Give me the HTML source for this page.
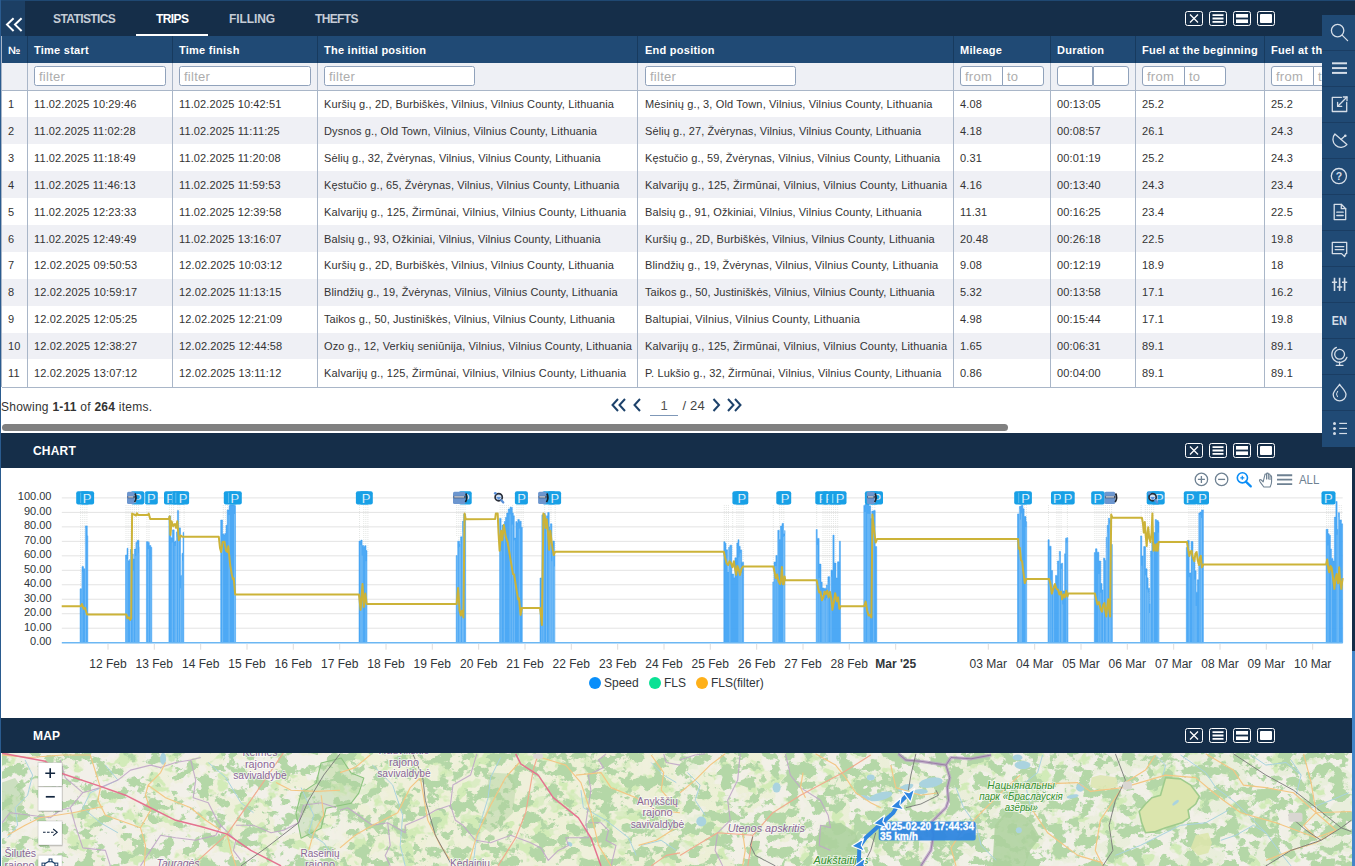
<!DOCTYPE html><html><head><meta charset="utf-8"><title>Trips</title><style>
*{box-sizing:border-box;margin:0;padding:0}
html,body{width:1355px;height:866px;overflow:hidden;background:#fff}
body{position:relative;font-family:"Liberation Sans",sans-serif;font-size:11px;color:#333}
.abs{position:absolute}
.bar{position:absolute;left:0;width:1355px;background:#152e49}
.tab{position:absolute;top:12px;font-weight:bold;font-size:12px;color:#c5ccd6;white-space:nowrap;letter-spacing:.1px}
.ttl{position:absolute;font-weight:bold;font-size:12px;color:#fff;left:33px;letter-spacing:.2px}
.th{position:absolute;top:44px;font-weight:bold;font-size:11px;color:#fff;white-space:nowrap;letter-spacing:.25px}
.td{position:absolute;white-space:nowrap;font-size:11px;color:#333;line-height:14px;letter-spacing:.125px}
.vsep{position:absolute;width:1px;background:#a9b6c8}
.inp{position:absolute;top:66px;height:20px;border:1px solid #90a2bb;border-radius:2.5px;background:#fff;color:#adadad;font-size:13px;letter-spacing:.25px;line-height:19px;padding-left:4px;white-space:nowrap;overflow:hidden}
.row{position:absolute;left:2px;width:1353px;height:26.9px}
.wb{position:absolute;top:11px;width:18px;height:15px;border:1.5px solid #fff;border-radius:2.5px}
.sb{position:absolute;left:0;width:31px;height:36px;border-top:1px solid #2c5786}
</style></head><body>
<div class="bar" style="top:0;height:36px"></div>
<div class="abs" style="left:0;top:0;width:1355px;height:1.3px;background:#1f4872"></div>
<div class="abs" style="left:1px;top:1px;width:24px;height:35px;background:#1c3f64"></div>
<svg class="abs" style="left:5px;top:17px" width="18" height="16" viewBox="0 0 18 16"><path d="M8.6 1.2 L2 7.6 L8.6 14 M16.6 1.2 L10 7.6 L16.6 14" fill="none" stroke="#fff" stroke-width="2"/></svg>
<div class="tab" style="left:53px;letter-spacing:-0.60px;">STATISTICS</div>
<div class="tab" style="left:156px;letter-spacing:-0.60px;color:#fff;">TRIPS</div>
<div class="tab" style="left:229px;letter-spacing:-0.10px;">FILLING</div>
<div class="tab" style="left:315px;letter-spacing:-0.65px;">THEFTS</div>
<div class="abs" style="left:136px;top:34px;width:72px;height:2px;background:#fff"></div>
<div class="wb" style="left:1185px;top:11px"></div><svg class="abs" style="left:1185px;top:11px" width="18" height="15" viewBox="0.5 0 18 15"><path d="M5.5 3.5 L13.5 11.5 M13.5 3.5 L5.5 11.5" stroke="#fff" stroke-width="1.3" fill="none"/></svg><div class="wb" style="left:1209px;top:11px"></div><svg class="abs" style="left:1209px;top:11px" width="18" height="15" viewBox="0.5 0 18 15"><path d="M4 4.2 H15 M4 7.5 H15 M4 10.8 H15" stroke="#fff" stroke-width="1.8" fill="none"/></svg><div class="wb" style="left:1233px;top:11px"></div><svg class="abs" style="left:1233px;top:11px" width="18" height="15" viewBox="0.5 0 18 15"><rect x="3.5" y="3" width="12" height="3.6" fill="#fff"/><rect x="3.5" y="8.4" width="12" height="3.6" fill="#fff"/></svg><div class="wb" style="left:1257px;top:11px"></div><svg class="abs" style="left:1257px;top:11px" width="18" height="15" viewBox="0.5 0 18 15"><rect x="3.5" y="3" width="12" height="9" rx="1" fill="#fff"/></svg>
<div class="abs" style="left:0;top:36px;width:1355px;height:27px;background:#204a75"></div>
<div class="th" style="left:8px">№</div>
<div class="th" style="left:34px">Time start</div>
<div class="th" style="left:179px">Time finish</div>
<div class="th" style="left:324px">The initial position</div>
<div class="th" style="left:645px">End position</div>
<div class="th" style="left:960px">Mileage</div>
<div class="th" style="left:1057px">Duration</div>
<div class="th" style="left:1142px">Fuel at the beginning</div>
<div class="th" style="left:1271px">Fuel at the end</div>
<div class="abs" style="left:2px;top:63px;width:1353px;height:27px;background:#eef0f5"></div>
<div class="abs" style="left:2px;top:90px;width:1353px;height:1px;background:#a9b6c8"></div>
<div class="row" style="top:90.5px;background:#fff"></div>
<div class="row" style="top:117.4px;background:#eff0f5"></div>
<div class="row" style="top:144.3px;background:#fff"></div>
<div class="row" style="top:171.2px;background:#eff0f5"></div>
<div class="row" style="top:198.1px;background:#fff"></div>
<div class="row" style="top:225.0px;background:#eff0f5"></div>
<div class="row" style="top:251.9px;background:#fff"></div>
<div class="row" style="top:278.8px;background:#eff0f5"></div>
<div class="row" style="top:305.7px;background:#fff"></div>
<div class="row" style="top:332.6px;background:#eff0f5"></div>
<div class="row" style="top:359.5px;background:#fff"></div>
<div class="td" style="left:8px;top:97.0px">1</div>
<div class="td" style="left:34px;top:97.0px">11.02.2025 10:29:46</div>
<div class="td" style="left:179px;top:97.0px">11.02.2025 10:42:51</div>
<div class="td" style="left:324px;top:97.0px">Kuršių g., 2D, Burbiškės, Vilnius, Vilnius County, Lithuania</div>
<div class="td" style="left:645px;top:97.0px;letter-spacing:0.152px">Mėsinių g., 3, Old Town, Vilnius, Vilnius County, Lithuania</div>
<div class="td" style="left:960px;top:97.0px">4.08</div>
<div class="td" style="left:1057px;top:97.0px">00:13:05</div>
<div class="td" style="left:1142px;top:97.0px">25.2</div>
<div class="td" style="left:1271px;top:97.0px">25.2</div>
<div class="td" style="left:8px;top:123.9px">2</div>
<div class="td" style="left:34px;top:123.9px">11.02.2025 11:02:28</div>
<div class="td" style="left:179px;top:123.9px">11.02.2025 11:11:25</div>
<div class="td" style="left:324px;top:123.9px;letter-spacing:0.143px">Dysnos g., Old Town, Vilnius, Vilnius County, Lithuania</div>
<div class="td" style="left:645px;top:123.9px;letter-spacing:0.094px">Sėlių g., 27, Žvėrynas, Vilnius, Vilnius County, Lithuania</div>
<div class="td" style="left:960px;top:123.9px">4.18</div>
<div class="td" style="left:1057px;top:123.9px">00:08:57</div>
<div class="td" style="left:1142px;top:123.9px">26.1</div>
<div class="td" style="left:1271px;top:123.9px">24.3</div>
<div class="td" style="left:8px;top:150.8px">3</div>
<div class="td" style="left:34px;top:150.8px">11.02.2025 11:18:49</div>
<div class="td" style="left:179px;top:150.8px">11.02.2025 11:20:08</div>
<div class="td" style="left:324px;top:150.8px;letter-spacing:0.101px">Sėlių g., 32, Žvėrynas, Vilnius, Vilnius County, Lithuania</div>
<div class="td" style="left:645px;top:150.8px;letter-spacing:0.110px">Kęstučio g., 59, Žvėrynas, Vilnius, Vilnius County, Lithuania</div>
<div class="td" style="left:960px;top:150.8px">0.31</div>
<div class="td" style="left:1057px;top:150.8px">00:01:19</div>
<div class="td" style="left:1142px;top:150.8px">25.2</div>
<div class="td" style="left:1271px;top:150.8px">24.3</div>
<div class="td" style="left:8px;top:177.7px">4</div>
<div class="td" style="left:34px;top:177.7px">11.02.2025 11:46:13</div>
<div class="td" style="left:179px;top:177.7px">11.02.2025 11:59:53</div>
<div class="td" style="left:324px;top:177.7px;letter-spacing:0.112px">Kęstučio g., 65, Žvėrynas, Vilnius, Vilnius County, Lithuania</div>
<div class="td" style="left:645px;top:177.7px;letter-spacing:0.158px">Kalvarijų g., 125, Žirmūnai, Vilnius, Vilnius County, Lithuania</div>
<div class="td" style="left:960px;top:177.7px">4.16</div>
<div class="td" style="left:1057px;top:177.7px">00:13:40</div>
<div class="td" style="left:1142px;top:177.7px">24.3</div>
<div class="td" style="left:1271px;top:177.7px">23.4</div>
<div class="td" style="left:8px;top:204.6px">5</div>
<div class="td" style="left:34px;top:204.6px">11.02.2025 12:23:33</div>
<div class="td" style="left:179px;top:204.6px">11.02.2025 12:39:58</div>
<div class="td" style="left:324px;top:204.6px;letter-spacing:0.160px">Kalvarijų g., 125, Žirmūnai, Vilnius, Vilnius County, Lithuania</div>
<div class="td" style="left:645px;top:204.6px;letter-spacing:0.108px">Balsių g., 91, Ožkiniai, Vilnius, Vilnius County, Lithuania</div>
<div class="td" style="left:960px;top:204.6px">11.31</div>
<div class="td" style="left:1057px;top:204.6px">00:16:25</div>
<div class="td" style="left:1142px;top:204.6px">23.4</div>
<div class="td" style="left:1271px;top:204.6px">22.5</div>
<div class="td" style="left:8px;top:231.5px">6</div>
<div class="td" style="left:34px;top:231.5px">11.02.2025 12:49:49</div>
<div class="td" style="left:179px;top:231.5px">11.02.2025 13:16:07</div>
<div class="td" style="left:324px;top:231.5px;letter-spacing:0.110px">Balsių g., 93, Ožkiniai, Vilnius, Vilnius County, Lithuania</div>
<div class="td" style="left:645px;top:231.5px;letter-spacing:0.120px">Kuršių g., 2D, Burbiškės, Vilnius, Vilnius County, Lithuania</div>
<div class="td" style="left:960px;top:231.5px">20.48</div>
<div class="td" style="left:1057px;top:231.5px">00:26:18</div>
<div class="td" style="left:1142px;top:231.5px">22.5</div>
<div class="td" style="left:1271px;top:231.5px">19.8</div>
<div class="td" style="left:8px;top:258.4px">7</div>
<div class="td" style="left:34px;top:258.4px">12.02.2025 09:50:53</div>
<div class="td" style="left:179px;top:258.4px">12.02.2025 10:03:12</div>
<div class="td" style="left:324px;top:258.4px">Kuršių g., 2D, Burbiškės, Vilnius, Vilnius County, Lithuania</div>
<div class="td" style="left:645px;top:258.4px;letter-spacing:0.138px">Blindžių g., 19, Žvėrynas, Vilnius, Vilnius County, Lithuania</div>
<div class="td" style="left:960px;top:258.4px">9.08</div>
<div class="td" style="left:1057px;top:258.4px">00:12:19</div>
<div class="td" style="left:1142px;top:258.4px">18.9</div>
<div class="td" style="left:1271px;top:258.4px">18</div>
<div class="td" style="left:8px;top:285.3px">8</div>
<div class="td" style="left:34px;top:285.3px">12.02.2025 10:59:17</div>
<div class="td" style="left:179px;top:285.3px">12.02.2025 11:13:15</div>
<div class="td" style="left:324px;top:285.3px;letter-spacing:0.145px">Blindžių g., 19, Žvėrynas, Vilnius, Vilnius County, Lithuania</div>
<div class="td" style="left:645px;top:285.3px;letter-spacing:0.056px">Taikos g., 50, Justiniškės, Vilnius, Vilnius County, Lithuania</div>
<div class="td" style="left:960px;top:285.3px">5.32</div>
<div class="td" style="left:1057px;top:285.3px">00:13:58</div>
<div class="td" style="left:1142px;top:285.3px">17.1</div>
<div class="td" style="left:1271px;top:285.3px">16.2</div>
<div class="td" style="left:8px;top:312.2px">9</div>
<div class="td" style="left:34px;top:312.2px">12.02.2025 12:05:25</div>
<div class="td" style="left:179px;top:312.2px">12.02.2025 12:21:09</div>
<div class="td" style="left:324px;top:312.2px;letter-spacing:0.078px">Taikos g., 50, Justiniškės, Vilnius, Vilnius County, Lithuania</div>
<div class="td" style="left:645px;top:312.2px;letter-spacing:0.187px">Baltupiai, Vilnius, Vilnius County, Lithuania</div>
<div class="td" style="left:960px;top:312.2px">4.98</div>
<div class="td" style="left:1057px;top:312.2px">00:15:44</div>
<div class="td" style="left:1142px;top:312.2px">17.1</div>
<div class="td" style="left:1271px;top:312.2px">19.8</div>
<div class="td" style="left:8px;top:339.1px">10</div>
<div class="td" style="left:34px;top:339.1px">12.02.2025 12:38:27</div>
<div class="td" style="left:179px;top:339.1px">12.02.2025 12:44:58</div>
<div class="td" style="left:324px;top:339.1px;letter-spacing:0.152px">Ozo g., 12, Verkių seniūnija, Vilnius, Vilnius County, Lithuania</div>
<div class="td" style="left:645px;top:339.1px;letter-spacing:0.158px">Kalvarijų g., 125, Žirmūnai, Vilnius, Vilnius County, Lithuania</div>
<div class="td" style="left:960px;top:339.1px">1.65</div>
<div class="td" style="left:1057px;top:339.1px">00:06:31</div>
<div class="td" style="left:1142px;top:339.1px">89.1</div>
<div class="td" style="left:1271px;top:339.1px">89.1</div>
<div class="td" style="left:8px;top:366.0px">11</div>
<div class="td" style="left:34px;top:366.0px">12.02.2025 13:07:12</div>
<div class="td" style="left:179px;top:366.0px">12.02.2025 13:11:12</div>
<div class="td" style="left:324px;top:366.0px;letter-spacing:0.160px">Kalvarijų g., 125, Žirmūnai, Vilnius, Vilnius County, Lithuania</div>
<div class="td" style="left:645px;top:366.0px;letter-spacing:0.140px">P. Lukšio g., 32, Žirmūnai, Vilnius, Vilnius County, Lithuania</div>
<div class="td" style="left:960px;top:366.0px">0.86</div>
<div class="td" style="left:1057px;top:366.0px">00:04:00</div>
<div class="td" style="left:1142px;top:366.0px">89.1</div>
<div class="td" style="left:1271px;top:366.0px">89.1</div>
<div class="abs" style="left:2px;top:387px;width:1353px;height:1px;background:#a9b6c8"></div>
<div class="vsep" style="left:27px;top:36px;height:27px;background:#173a5e"></div>
<div class="vsep" style="left:27px;top:63px;height:324px"></div>
<div class="vsep" style="left:172px;top:36px;height:27px;background:#173a5e"></div>
<div class="vsep" style="left:172px;top:63px;height:324px"></div>
<div class="vsep" style="left:317px;top:36px;height:27px;background:#173a5e"></div>
<div class="vsep" style="left:317px;top:63px;height:324px"></div>
<div class="vsep" style="left:637px;top:36px;height:27px;background:#173a5e"></div>
<div class="vsep" style="left:637px;top:63px;height:324px"></div>
<div class="vsep" style="left:953px;top:36px;height:27px;background:#173a5e"></div>
<div class="vsep" style="left:953px;top:63px;height:324px"></div>
<div class="vsep" style="left:1050px;top:36px;height:27px;background:#173a5e"></div>
<div class="vsep" style="left:1050px;top:63px;height:324px"></div>
<div class="vsep" style="left:1135px;top:36px;height:27px;background:#173a5e"></div>
<div class="vsep" style="left:1135px;top:63px;height:324px"></div>
<div class="vsep" style="left:1264px;top:36px;height:27px;background:#173a5e"></div>
<div class="vsep" style="left:1264px;top:63px;height:324px"></div>
<div class="vsep" style="left:1.4px;top:36px;height:351px"></div>
<div class="inp" style="left:34px;width:132px;">filter</div>
<div class="inp" style="left:179px;width:132px;">filter</div>
<div class="inp" style="left:324px;width:151px;">filter</div>
<div class="inp" style="left:645px;width:151px;">filter</div>
<div class="inp" style="left:960px;width:43px;border-radius:3px 0 0 3px;">from</div>
<div class="inp" style="left:1002px;width:42px;border-radius:0 3px 3px 0;">to</div>
<div class="inp" style="left:1057px;width:36px;border-radius:3px 1px 1px 3px;"></div>
<div class="inp" style="left:1093px;width:36px;border-radius:1px 3px 3px 1px;"></div>
<div class="inp" style="left:1142px;width:43px;border-radius:3px 0 0 3px;">from</div>
<div class="inp" style="left:1184px;width:42px;border-radius:0 3px 3px 0;">to</div>
<div class="inp" style="left:1271px;width:43px;border-radius:3px 0 0 3px;">from</div>
<div class="inp" style="left:1313px;width:42px;border-radius:0 3px 3px 0;">to</div>
<div class="abs" style="left:1px;top:400px;font-size:12px;color:#333;white-space:nowrap;letter-spacing:.25px">Showing <b>1-11</b> of <b>264</b> items.</div>
<svg class="abs" style="left:608px;top:396px" width="140" height="22" viewBox="0 0 140 22"><g fill="none" stroke="#1d426b" stroke-width="2"><path d="M10 3 L4.5 9 L10 15 M17 3 L11.5 9 L17 15"/><path d="M32 3 L26.5 9 L32 15"/><path d="M105.500 3 L111 9 L105.500 15"/><path d="M120 3 L125.5 9 L120 15 M127 3 L132.5 9 L127 15"/></g><path d="M42 19.500 H70" stroke="#7f98b8" stroke-width="1"/></svg>
<div class="abs" style="left:650px;top:398px;width:28px;text-align:center;font-size:13px;color:#555">1</div>
<div class="abs" style="left:682.5px;top:398px;font-size:13px;color:#444;white-space:nowrap;letter-spacing:.2px">/ 24</div>
<div class="abs" style="left:2px;top:424px;width:1006px;height:7px;border-radius:3.5px;background:#808080"></div>
<div class="bar" style="top:433px;height:35px"></div>
<div class="ttl" style="top:444px">CHART</div>
<div class="wb" style="left:1185px;top:443px"></div><svg class="abs" style="left:1185px;top:443px" width="18" height="15" viewBox="0.5 0 18 15"><path d="M5.5 3.5 L13.5 11.5 M13.5 3.5 L5.5 11.5" stroke="#fff" stroke-width="1.3" fill="none"/></svg><div class="wb" style="left:1209px;top:443px"></div><svg class="abs" style="left:1209px;top:443px" width="18" height="15" viewBox="0.5 0 18 15"><path d="M4 4.2 H15 M4 7.5 H15 M4 10.8 H15" stroke="#fff" stroke-width="1.8" fill="none"/></svg><div class="wb" style="left:1233px;top:443px"></div><svg class="abs" style="left:1233px;top:443px" width="18" height="15" viewBox="0.5 0 18 15"><rect x="3.5" y="3" width="12" height="3.6" fill="#fff"/><rect x="3.5" y="8.4" width="12" height="3.6" fill="#fff"/></svg><div class="wb" style="left:1257px;top:443px"></div><svg class="abs" style="left:1257px;top:443px" width="18" height="15" viewBox="0.5 0 18 15"><rect x="3.5" y="3" width="12" height="9" rx="1" fill="#fff"/></svg>
<svg class="abs" style="left:0;top:468px" width="1352" height="249" viewBox="0 0 1352 249" font-family="Liberation Sans, sans-serif">
<path d="M61.8 29.90 H1342.7 M61.8 44.38 H1342.7 M61.8 58.86 H1342.7 M61.8 73.34 H1342.7 M61.8 87.82 H1342.7 M61.8 102.30 H1342.7 M61.8 116.78 H1342.7 M61.8 131.26 H1342.7 M61.8 145.74 H1342.7 M61.8 160.22 H1342.7" stroke="#e3e3e3" stroke-width="1" fill="none"/>
<text x="51.500" y="32.4" text-anchor="end" font-size="11" fill="#30363a">100.00</text>
<text x="51.500" y="46.9" text-anchor="end" font-size="11" fill="#30363a">90.00</text>
<text x="51.500" y="61.4" text-anchor="end" font-size="11" fill="#30363a">80.00</text>
<text x="51.500" y="75.8" text-anchor="end" font-size="11" fill="#30363a">70.00</text>
<text x="51.500" y="90.3" text-anchor="end" font-size="11" fill="#30363a">60.00</text>
<text x="51.500" y="104.8" text-anchor="end" font-size="11" fill="#30363a">50.00</text>
<text x="51.500" y="119.3" text-anchor="end" font-size="11" fill="#30363a">40.00</text>
<text x="51.500" y="133.8" text-anchor="end" font-size="11" fill="#30363a">30.00</text>
<text x="51.500" y="148.2" text-anchor="end" font-size="11" fill="#30363a">20.00</text>
<text x="51.500" y="162.7" text-anchor="end" font-size="11" fill="#30363a">10.00</text>
<text x="51.500" y="177.2" text-anchor="end" font-size="11" fill="#30363a">0.00</text>
<path d="M80.6 37.0 V118.0 M82.7 37.0 V99.0 M84.8 37.0 V77.3 M86.9 37.0 V57.8 M126.0 37.0 V73.8 M128.1 37.0 V89.3 M130.2 37.0 V91.3 M132.3 37.0 V83.6 M134.4 37.0 V86.4 M136.5 37.0 V74.4 M138.6 37.0 V75.9 M146.9 37.0 V73.9 M149.0 37.0 V74.9 M169.4 37.0 V49.5 M171.5 37.0 V48.4 M173.6 37.0 V66.2 M177.8 37.0 V42.8 M179.9 37.0 V68.4 M184.1 37.0 V64.6 M223.3 37.0 V67.4 M225.4 37.0 V65.4 M227.5 37.0 V46.5 M359.5 37.0 V73.5 M363.7 37.0 V78.6 M365.8 37.0 V78.4 M367.9 37.0 V85.6 M456.7 37.0 V68.0 M458.8 37.0 V73.8 M460.9 37.0 V72.9 M463.0 37.0 V54.3 M465.1 37.0 V49.9 M500.1 37.0 V50.7 M502.2 37.0 V54.8 M504.3 37.0 V55.6 M506.4 37.0 V48.4 M508.5 37.0 V41.9 M512.7 37.0 V44.4 M516.9 37.0 V54.3 M519.0 37.0 V49.9 M521.1 37.0 V57.5 M523.2 37.0 V60.8 M544.7 37.0 V46.0 M548.9 37.0 V43.3 M551.0 37.0 V54.7 M555.2 37.0 V81.8 M724.3 37.0 V73.8 M726.4 37.0 V80.3 M728.5 37.0 V81.7 M732.7 37.0 V89.0 M736.9 37.0 V80.8 M739.0 37.0 V72.1 M741.1 37.0 V82.0 M743.2 37.0 V111.1 M773.3 37.0 V114.1 M779.6 37.0 V64.3 M781.7 37.0 V52.4 M783.8 37.0 V61.2 M816.7 37.0 V61.5 M823.0 37.0 V120.1 M825.1 37.0 V120.7 M827.2 37.0 V116.7 M829.3 37.0 V109.2 M831.4 37.0 V130.6 M833.5 37.0 V67.1 M835.6 37.0 V101.1 M837.7 37.0 V73.2 M870.6 37.0 V46.2 M872.7 37.0 V43.5 M874.8 37.0 V45.2 M1024.3 37.0 V45.2 M1026.4 37.0 V54.1 M1048.5 37.0 V71.8 M1056.9 37.0 V97.0 M1059.0 37.0 V87.4 M1061.1 37.0 V82.8 M1067.4 37.0 V70.1 M1094.8 37.0 V73.8 M1096.9 37.0 V75.6 M1099.0 37.0 V76.5 M1101.1 37.0 V112.9 M1103.2 37.0 V122.1 M1105.3 37.0 V84.4 M1107.4 37.0 V60.2 M1109.5 37.0 V49.0 M1111.6 37.0 V61.7 M1141.1 37.0 V68.1 M1145.3 37.0 V81.4 M1147.4 37.0 V101.3 M1149.5 37.0 V135.2 M1151.6 37.0 V77.7 M1153.7 37.0 V49.1 M1188.9 37.0 V91.6 M1191.0 37.0 V88.5 M1193.1 37.0 V80.7 M1195.2 37.0 V100.6 M1197.3 37.0 V106.2 M1199.4 37.0 V45.1 M1201.5 37.0 V43.1 M1203.6 37.0 V43.7 M1326.6 37.0 V61.8 M1328.7 37.0 V66.1 M1330.8 37.0 V79.4 M1332.9 37.0 V93.2 M1335.0 37.0 V56.0 M1339.2 37.0 V45.1 M1341.3 37.0 V55.3" stroke="#c9cfc9" stroke-width="0.9" stroke-dasharray="1 1" fill="none" opacity=".55"/>
<path d="M80.1 174.7 L80.1 120.8 L82.0 120.8 L82.0 98.6 L83.5 98.6 L83.5 100.8 L85.4 100.8 L85.4 57.9 L87.3 57.9 L87.3 67.8 L87.8 67.8 L87.8 174.7 Z" fill="#3fa2f4" fill-opacity=".93" stroke="#3a9ff2" stroke-width="0.500" stroke-linejoin="round"/>
<path d="M82.0 103.8 V174.7 M85.4 60.2 V174.7" stroke="#9fd0f9" stroke-width="0.600" fill="none" opacity="0.8"/>
<path d="M125.5 174.7 L125.5 87.0 L127.0 87.0 L127.0 80.3 L128.0 80.3 L128.0 92.8 L129.5 92.8 L129.5 91.5 L130.5 91.5 L130.5 81.4 L132.0 81.4 L132.0 86.0 L133.2 86.0 L133.2 90.9 L134.4 90.9 L134.4 81.1 L135.9 81.1 L135.9 74.4 L137.1 74.4 L137.1 72.4 L139.0 72.4 L139.0 79.2 L139.2 79.2 L139.2 174.7 Z" fill="#3fa2f4" fill-opacity=".93" stroke="#3a9ff2" stroke-width="0.500" stroke-linejoin="round"/>
<path d="M127.0 91.1 V174.7 M130.5 85.7 V174.7 M133.2 102.6 V174.7 M135.9 88.1 V174.7 M137.1 75.6 V174.7 M139.0 85.2 V174.7" stroke="#9fd0f9" stroke-width="0.600" fill="none" opacity="0.8"/>
<path d="M146.4 174.7 L146.4 73.7 L148.3 73.7 L148.3 74.4 L149.3 74.4 L149.3 77.5 L150.8 77.5 L150.8 79.3 L151.8 79.3 L151.8 174.7 Z" fill="#3fa2f4" fill-opacity=".93" stroke="#3a9ff2" stroke-width="0.500" stroke-linejoin="round"/>
<path d="M148.3 81.1 V174.7 M150.8 91.9 V174.7" stroke="#9fd0f9" stroke-width="0.600" fill="none" opacity="0.8"/>
<path d="M168.9 174.7 L168.9 48.0 L170.8 48.0 L170.8 69.7 L172.3 69.7 L172.3 61.9 L174.2 61.9 L174.2 74.1 L175.2 74.1 L175.2 73.0 L176.4 73.0 L176.4 63.9 L177.4 63.9 L177.4 42.6 L178.6 42.6 L178.6 59.9 L180.5 59.9 L180.5 107.4 L182.0 107.4 L182.0 85.3 L183.0 85.3 L183.0 64.4 L183.8 64.4 L183.8 174.7 Z" fill="#3fa2f4" fill-opacity=".93" stroke="#3a9ff2" stroke-width="0.500" stroke-linejoin="round"/>
<path d="M172.3 74.3 V174.7 M175.2 78.0 V174.7 M176.4 68.8 V174.7 M178.6 66.9 V174.7 M180.5 120.3 V174.7 M182.0 92.8 V174.7" stroke="#9fd0f9" stroke-width="0.600" fill="none" opacity="0.8"/>
<path d="M220.7 174.7 L220.7 52.0 L222.6 52.0 L222.6 65.9 L223.8 65.9 L223.8 66.9 L224.8 66.9 L224.8 65.4 L226.0 65.4 L226.0 57.3 L227.2 57.3 L227.2 41.9 L229.1 41.9 L229.1 37.6 L230.1 37.6 L230.1 37.1 L231.6 37.1 L231.6 37.0 L233.5 37.0 L233.5 37.0 L234.5 37.0 L234.5 37.6 L235.5 37.6 L235.6 174.7 Z" fill="#3fa2f4" fill-opacity=".93" stroke="#3a9ff2" stroke-width="0.500" stroke-linejoin="round"/>
<path d="M222.6 77.2 V174.7 M229.1 47.0 V174.7 M234.5 46.0 V174.7" stroke="#9fd0f9" stroke-width="0.600" fill="none" opacity="0.8"/>
<path d="M359.0 174.7 L359.0 73.0 L360.9 73.0 L360.9 72.1 L362.1 72.1 L362.1 77.5 L363.6 77.5 L363.6 78.4 L364.8 78.4 L364.8 77.7 L366.0 77.7 L366.0 82.6 L367.0 82.6 L367.0 174.7 Z" fill="#3fa2f4" fill-opacity=".93" stroke="#3a9ff2" stroke-width="0.500" stroke-linejoin="round"/>
<path d="M360.9 77.0 V174.7 M362.1 87.6 V174.7 M366.0 93.2 V174.7" stroke="#9fd0f9" stroke-width="0.600" fill="none" opacity="0.8"/>
<path d="M456.2 174.7 L456.2 87.6 L457.7 87.6 L457.7 73.2 L459.6 73.2 L459.6 75.7 L460.6 75.7 L460.6 68.8 L462.5 68.8 L462.5 53.2 L463.7 53.2 L463.7 46.1 L465.6 46.1 L465.7 174.7 Z" fill="#3fa2f4" fill-opacity=".93" stroke="#3a9ff2" stroke-width="0.500" stroke-linejoin="round"/>
<path d="M457.7 80.2 V174.7 M459.6 78.8 V174.7 M460.6 74.9 V174.7 M462.5 63.6 V174.7 M463.7 54.4 V174.7" stroke="#9fd0f9" stroke-width="0.600" fill="none" opacity="0.8"/>
<path d="M499.6 174.7 L499.6 50.4 L501.1 50.4 L501.1 72.2 L502.1 72.2 L502.1 57.0 L503.3 57.0 L503.3 64.5 L504.3 64.5 L504.3 53.5 L505.5 53.5 L505.5 49.3 L506.7 49.3 L506.7 45.1 L508.2 45.1 L508.2 41.0 L510.1 41.0 L510.1 39.0 L511.1 39.0 L511.1 39.4 L512.3 39.4 L512.3 44.9 L513.3 44.9 L513.3 47.7 L514.3 47.7 L514.3 70.1 L515.8 70.1 L515.8 53.6 L516.8 53.6 L516.8 54.8 L517.8 54.8 L517.8 51.4 L519.3 51.4 L519.3 53.2 L521.2 53.2 L521.2 59.3 L522.3 59.3 L522.3 174.7 Z" fill="#3fa2f4" fill-opacity=".93" stroke="#3a9ff2" stroke-width="0.500" stroke-linejoin="round"/>
<path d="M501.1 82.7 V174.7 M504.3 57.7 V174.7 M510.1 46.4 V174.7 M512.3 56.5 V174.7 M514.3 72.3 V174.7 M519.3 60.5 V174.7" stroke="#9fd0f9" stroke-width="0.600" fill="none" opacity="0.8"/>
<path d="M540.0 174.7 L540.0 110.0 L541.9 110.0 L541.9 46.8 L543.8 46.8 L543.8 45.5 L545.3 45.5 L545.3 49.7 L546.5 49.7 L546.5 47.8 L547.7 47.8 L547.7 44.5 L549.2 44.5 L549.2 59.1 L550.4 59.1 L550.4 55.8 L551.9 55.8 L551.9 83.4 L552.9 83.4 L552.9 73.0 L554.4 73.0 L554.4 86.6 L554.9 86.6 L554.9 174.7 Z" fill="#3fa2f4" fill-opacity=".93" stroke="#3a9ff2" stroke-width="0.500" stroke-linejoin="round"/>
<path d="M541.9 48.8 V174.7 M543.8 51.5 V174.7 M546.5 50.2 V174.7 M549.2 63.3 V174.7 M550.4 58.8 V174.7 M551.9 93.2 V174.7 M552.9 84.3 V174.7 M554.4 98.4 V174.7" stroke="#9fd0f9" stroke-width="0.600" fill="none" opacity="0.8"/>
<path d="M723.8 174.7 L723.8 73.7 L725.0 73.7 L725.0 75.2 L726.0 75.2 L726.0 81.8 L727.5 81.8 L727.5 103.9 L728.7 103.9 L728.7 79.2 L729.9 79.2 L729.9 77.2 L731.8 77.2 L731.8 106.1 L733.7 106.1 L733.7 109.8 L734.9 109.8 L734.9 89.8 L736.8 89.8 L736.8 74.9 L738.0 74.9 L738.0 71.8 L739.0 71.8 L739.0 78.3 L740.2 78.3 L740.2 81.9 L741.7 81.9 L741.7 94.2 L743.6 94.2 L743.6 174.7 Z" fill="#3fa2f4" fill-opacity=".93" stroke="#3a9ff2" stroke-width="0.500" stroke-linejoin="round"/>
<path d="M729.9 79.3 V174.7 M739.0 89.2 V174.7 M740.2 84.8 V174.7 M741.7 105.0 V174.7" stroke="#9fd0f9" stroke-width="0.600" fill="none" opacity="0.8"/>
<path d="M772.8 174.7 L772.8 114.0 L774.0 114.0 L774.0 94.0 L775.9 94.0 L775.9 87.5 L777.8 87.5 L777.8 62.3 L779.3 62.3 L779.3 71.6 L780.5 71.6 L780.5 58.0 L782.0 58.0 L782.0 55.4 L783.5 55.4 L783.5 65.8 L784.7 65.8 L784.7 62.5 L785.0 62.5 L785.0 174.7 Z" fill="#3fa2f4" fill-opacity=".93" stroke="#3a9ff2" stroke-width="0.500" stroke-linejoin="round"/>
<path d="M774.0 98.6 V174.7 M775.9 98.0 V174.7 M777.8 69.9 V174.7 M783.5 68.8 V174.7 M784.7 68.0 V174.7" stroke="#9fd0f9" stroke-width="0.600" fill="none" opacity="0.8"/>
<path d="M816.2 174.7 L816.2 61.5 L817.2 61.5 L817.2 70.4 L819.1 70.4 L819.1 96.1 L821.0 96.1 L821.0 114.1 L822.2 114.1 L822.2 120.1 L823.7 120.1 L823.7 120.6 L824.9 120.6 L824.9 120.4 L826.4 120.4 L826.4 117.0 L827.9 117.0 L827.9 108.7 L829.8 108.7 L829.8 124.6 L831.0 124.6 L831.0 102.3 L832.9 102.3 L832.9 67.1 L834.1 67.1 L834.1 95.0 L836.0 95.0 L836.0 110.0 L837.5 110.0 L837.5 93.8 L839.4 93.8 L839.4 73.2 L840.4 73.2 L840.6 174.7 Z" fill="#3fa2f4" fill-opacity=".93" stroke="#3a9ff2" stroke-width="0.500" stroke-linejoin="round"/>
<path d="M817.2 76.9 V174.7 M819.1 110.1 V174.7 M822.2 127.2 V174.7 M823.7 123.2 V174.7 M824.9 132.4 V174.7 M826.4 130.2 V174.7 M827.9 113.9 V174.7 M831.0 108.8 V174.7" stroke="#9fd0f9" stroke-width="0.600" fill="none" opacity="0.8"/>
<path d="M863.8 174.7 L863.8 37.4 L865.0 37.4 L865.0 36.2 L866.0 36.2 L866.0 36.0 L867.9 36.0 L867.9 36.0 L869.1 36.0 L869.1 37.9 L870.6 37.9 L870.6 50.6 L871.8 50.6 L871.8 43.1 L873.7 43.1 L873.7 42.6 L875.2 42.6 L875.2 78.6 L876.7 78.6 L876.8 174.7 Z" fill="#3fa2f4" fill-opacity=".93" stroke="#3a9ff2" stroke-width="0.500" stroke-linejoin="round"/>
<path d="M865.0 44.0 V174.7 M867.9 45.8 V174.7 M869.1 45.9 V174.7 M873.7 48.6 V174.7" stroke="#9fd0f9" stroke-width="0.600" fill="none" opacity="0.8"/>
<path d="M1017.5 174.7 L1017.5 45.9 L1019.4 45.9 L1019.4 38.5 L1020.4 38.5 L1020.4 38.0 L1021.4 38.0 L1021.4 37.3 L1022.9 37.3 L1022.9 40.8 L1024.1 40.8 L1024.1 48.5 L1026.0 48.5 L1026.0 53.8 L1026.7 53.8 L1026.7 174.7 Z" fill="#3fa2f4" fill-opacity=".93" stroke="#3a9ff2" stroke-width="0.500" stroke-linejoin="round"/>
<path d="M1019.4 41.2 V174.7 M1020.4 51.6 V174.7 M1021.4 45.4 V174.7 M1026.0 59.1 V174.7" stroke="#9fd0f9" stroke-width="0.600" fill="none" opacity="0.8"/>
<path d="M1048.0 174.7 L1048.0 71.7 L1049.2 71.7 L1049.2 78.2 L1051.1 78.2 L1051.1 102.5 L1052.6 102.5 L1052.6 120.6 L1053.6 120.6 L1053.6 117.7 L1055.5 117.7 L1055.5 107.4 L1057.4 107.4 L1057.4 93.1 L1059.3 93.1 L1059.3 83.4 L1060.5 83.4 L1060.5 95.8 L1061.7 95.8 L1061.7 95.2 L1062.7 95.2 L1062.7 122.9 L1064.6 122.9 L1064.6 85.8 L1065.6 85.8 L1065.6 70.2 L1066.8 70.2 L1066.8 69.7 L1067.8 69.7 L1068.0 174.7 Z" fill="#3fa2f4" fill-opacity=".93" stroke="#3a9ff2" stroke-width="0.500" stroke-linejoin="round"/>
<path d="M1049.2 81.8 V174.7 M1051.1 112.1 V174.7 M1053.6 120.5 V174.7 M1059.3 88.1 V174.7 M1061.7 100.8 V174.7 M1062.7 136.4 V174.7 M1066.8 74.6 V174.7" stroke="#9fd0f9" stroke-width="0.600" fill="none" opacity="0.8"/>
<path d="M1094.3 174.7 L1094.3 84.6 L1095.5 84.6 L1095.5 80.8 L1097.0 80.8 L1097.0 84.2 L1098.9 84.2 L1098.9 93.0 L1100.8 93.0 L1100.8 115.5 L1102.0 115.5 L1102.0 122.0 L1103.5 122.0 L1103.5 90.2 L1105.0 90.2 L1105.0 92.6 L1106.2 92.6 L1106.2 69.3 L1107.2 69.3 L1107.2 57.2 L1108.4 57.2 L1108.4 50.2 L1109.6 50.2 L1109.6 52.3 L1110.8 52.3 L1110.8 76.4 L1112.3 76.4 L1112.4 174.7 Z" fill="#3fa2f4" fill-opacity=".93" stroke="#3a9ff2" stroke-width="0.500" stroke-linejoin="round"/>
<path d="M1098.9 105.9 V174.7 M1100.8 124.7 V174.7 M1103.5 92.5 V174.7 M1106.2 79.9 V174.7 M1107.2 64.6 V174.7 M1109.6 55.6 V174.7 M1110.8 80.4 V174.7" stroke="#9fd0f9" stroke-width="0.600" fill="none" opacity="0.8"/>
<path d="M1140.6 174.7 L1140.6 68.0 L1141.8 68.0 L1141.8 88.1 L1143.7 88.1 L1143.7 78.6 L1145.6 78.6 L1145.6 100.8 L1147.1 100.8 L1147.1 109.8 L1148.1 109.8 L1148.1 120.2 L1149.6 120.2 L1149.6 135.7 L1150.6 135.7 L1150.6 83.0 L1151.8 83.0 L1151.8 73.6 L1153.3 73.6 L1153.3 64.6 L1155.2 64.6 L1155.2 51.6 L1156.4 51.6 L1156.4 52.6 L1158.3 52.6 L1158.3 53.9 L1159.0 53.9 L1159.0 174.7 Z" fill="#3fa2f4" fill-opacity=".93" stroke="#3a9ff2" stroke-width="0.500" stroke-linejoin="round"/>
<path d="M1141.8 97.7 V174.7 M1143.7 88.1 V174.7 M1145.6 107.3 V174.7 M1147.1 121.4 V174.7 M1148.1 124.5 V174.7 M1149.6 145.0 V174.7 M1150.6 89.1 V174.7 M1153.3 75.6 V174.7 M1158.3 64.6 V174.7" stroke="#9fd0f9" stroke-width="0.600" fill="none" opacity="0.8"/>
<path d="M1186.3 174.7 L1186.3 79.4 L1187.3 79.4 L1187.3 72.6 L1189.2 72.6 L1189.2 104.9 L1191.1 104.9 L1191.1 73.5 L1193.0 73.5 L1193.0 89.7 L1194.9 89.7 L1194.9 102.8 L1196.1 102.8 L1196.1 124.2 L1197.3 124.2 L1197.3 111.8 L1198.8 111.8 L1198.8 45.1 L1200.0 45.1 L1200.0 44.0 L1201.5 44.0 L1201.5 42.0 L1203.4 42.0 L1203.4 174.7 Z" fill="#3fa2f4" fill-opacity=".93" stroke="#3a9ff2" stroke-width="0.500" stroke-linejoin="round"/>
<path d="M1189.2 109.2 V174.7 M1193.0 92.4 V174.7 M1194.9 111.4 V174.7 M1196.1 137.9 V174.7 M1200.0 47.0 V174.7 M1201.5 50.0 V174.7" stroke="#9fd0f9" stroke-width="0.600" fill="none" opacity="0.8"/>
<path d="M1326.1 174.7 L1326.1 61.3 L1328.0 61.3 L1328.0 65.8 L1329.2 65.8 L1329.2 67.2 L1330.4 67.2 L1330.4 80.9 L1331.4 80.9 L1331.4 90.4 L1332.9 90.4 L1332.9 92.9 L1334.4 92.9 L1334.4 49.1 L1335.9 49.1 L1335.9 33.5 L1337.1 33.5 L1337.1 61.3 L1338.3 61.3 L1338.3 44.8 L1339.5 44.8 L1339.5 52.0 L1341.4 52.0 L1341.4 55.8 L1342.6 55.8 L1342.7 174.7 Z" fill="#3fa2f4" fill-opacity=".93" stroke="#3a9ff2" stroke-width="0.500" stroke-linejoin="round"/>
<path d="M1328.0 77.5 V174.7 M1331.4 98.1 V174.7 M1337.1 66.8 V174.7 M1338.3 49.0 V174.7" stroke="#9fd0f9" stroke-width="0.600" fill="none" opacity="0.8"/>
<path d="M61.8 174.70 H1342.7" stroke="#6cb7f3" stroke-width="1.6" fill="none"/>
<path d="M61.7 138.3 L80.7 138.3 L82.0 136.1 L83.6 140.8 L85.1 139.9 L87.0 146.5 L126.4 146.5 L127.4 150.3 L128.9 149.4 L130.2 151.9 L131.2 150.3 L132.1 45.6 L136.0 47.5 L136.9 45.2 L138.0 47.1 L148.0 47.1 L148.7 45.6 L150.2 50.9 L168.9 50.9 L169.7 48.4 L170.4 66.9 L171.6 53.2 L173.1 58.0 L175.0 56.0 L176.1 59.9 L177.3 53.2 L178.8 72.2 L180.7 67.5 L182.6 68.8 L218.8 68.8 L220.0 79.9 L221.1 84.0 L222.6 74.1 L224.5 73.8 L226.0 82.7 L227.6 84.0 L228.3 78.3 L230.2 97.0 L231.8 106.5 L232.9 111.3 L233.7 110.3 L235.2 126.5 L255.0 126.5 L340.0 126.5 L359.0 126.5 L360.6 141.8 L362.5 116.0 L363.8 138.9 L365.3 125.6 L366.7 136.1 L456.6 136.1 L458.1 119.9 L459.6 142.7 L460.8 147.5 L461.9 142.7 L463.4 149.4 L464.6 45.6 L465.7 51.3 L495.2 50.9 L495.8 45.6 L497.7 45.6 L498.5 64.6 L499.6 82.7 L501.1 62.7 L502.3 72.2 L503.8 57.0 L505.7 68.4 L507.6 74.1 L510.5 91.3 L513.0 106.1 L514.1 106.5 L516.2 119.9 L518.1 131.3 L519.0 130.3 L520.6 146.9 L521.9 139.9 L540.0 139.9 L541.1 148.4 L541.9 157.0 L543.4 45.6 L544.8 47.5 L545.7 59.9 L546.7 51.3 L548.0 64.6 L549.1 81.8 L550.3 62.7 L551.4 72.2 L552.6 80.8 L553.7 87.1 L555.2 83.7 L700.0 83.7 L723.8 83.7 L725.1 89.4 L726.7 95.5 L728.2 97.0 L729.5 93.2 L731.0 95.1 L732.4 99.3 L733.9 93.2 L735.0 100.8 L736.2 106.9 L737.3 98.0 L738.5 100.8 L740.0 106.9 L741.5 100.8 L742.9 98.5 L773.3 98.5 L774.7 104.6 L775.8 110.3 L777.1 106.5 L778.5 113.2 L780.0 116.0 L781.1 110.3 L781.9 98.9 L782.7 116.0 L783.8 116.4 L784.6 108.4 L785.3 112.2 L816.6 112.2 L818.1 119.9 L819.2 124.6 L820.4 123.7 L821.9 132.2 L823.4 129.4 L824.6 123.7 L825.7 126.0 L827.2 122.7 L828.6 129.4 L829.9 123.7 L831.4 131.3 L832.4 141.8 L833.7 135.1 L835.2 125.2 L836.8 133.2 L838.1 129.4 L839.4 140.8 L840.6 138.3 L864.2 138.3 L865.7 133.6 L867.2 142.7 L868.6 147.5 L869.9 146.9 L871.4 149.4 L872.4 46.5 L873.3 55.1 L874.3 63.7 L874.9 68.4 L875.6 74.5 L877.1 70.9 L1000.0 70.9 L1018.1 70.9 L1018.7 80.8 L1019.8 79.9 L1021.0 92.2 L1022.1 93.2 L1023.2 102.7 L1024.8 115.1 L1026.3 110.9 L1049.1 110.9 L1050.5 116.0 L1051.8 125.6 L1053.3 120.8 L1054.9 116.0 L1056.4 120.8 L1058.1 121.8 L1059.4 126.5 L1061.0 123.7 L1062.1 131.3 L1063.6 126.5 L1064.8 129.4 L1066.3 122.7 L1067.4 128.4 L1068.2 125.6 L1094.9 125.6 L1096.2 131.3 L1097.5 136.6 L1099.0 134.1 L1100.6 140.8 L1101.9 143.7 L1103.2 137.0 L1104.4 135.1 L1105.3 142.7 L1106.3 148.4 L1107.2 138.9 L1108.2 131.3 L1109.1 140.8 L1110.1 148.4 L1111.2 46.5 L1112.4 49.8 L1141.9 49.8 L1142.9 55.1 L1143.8 64.6 L1144.8 54.1 L1145.7 67.5 L1146.7 78.0 L1147.6 64.6 L1148.2 59.3 L1149.3 70.3 L1150.5 74.1 L1151.6 64.6 L1152.4 45.6 L1153.1 74.1 L1153.5 82.7 L1154.7 76.4 L1155.8 82.7 L1157.0 76.0 L1157.7 82.7 L1158.5 74.1 L1187.0 74.1 L1188.2 81.8 L1189.3 87.9 L1190.5 83.7 L1191.6 82.7 L1192.8 89.4 L1194.3 93.2 L1195.4 85.6 L1196.6 84.0 L1197.7 92.2 L1199.0 97.0 L1200.0 89.4 L1200.8 87.9 L1201.9 99.3 L1203.4 96.6 L1240.0 96.6 L1239.9 96.6 L1326.1 96.6 L1327.2 91.4 L1328.2 99.7 L1329.2 104.2 L1330.5 98.0 L1331.7 100.1 L1333.0 110.1 L1334.4 120.9 L1335.5 110.1 L1336.7 105.9 L1338.0 115.3 L1338.8 110.1 L1339.2 99.3 L1340.0 112.1 L1341.3 120.9 L1342.1 114.2 L1342.7 110.1" fill="none" stroke="#ccb338" stroke-width="2" stroke-linejoin="round" stroke-linecap="butt"/>
<text x="108.0" y="200.3" text-anchor="middle" font-size="12" fill="#30363a">12 Feb</text>
<text x="154.3" y="200.3" text-anchor="middle" font-size="12" fill="#30363a">13 Feb</text>
<text x="200.7" y="200.3" text-anchor="middle" font-size="12" fill="#30363a">14 Feb</text>
<text x="247.0" y="200.3" text-anchor="middle" font-size="12" fill="#30363a">15 Feb</text>
<text x="293.3" y="200.3" text-anchor="middle" font-size="12" fill="#30363a">16 Feb</text>
<text x="339.7" y="200.3" text-anchor="middle" font-size="12" fill="#30363a">17 Feb</text>
<text x="386.0" y="200.3" text-anchor="middle" font-size="12" fill="#30363a">18 Feb</text>
<text x="432.3" y="200.3" text-anchor="middle" font-size="12" fill="#30363a">19 Feb</text>
<text x="478.7" y="200.3" text-anchor="middle" font-size="12" fill="#30363a">20 Feb</text>
<text x="525.0" y="200.3" text-anchor="middle" font-size="12" fill="#30363a">21 Feb</text>
<text x="571.3" y="200.3" text-anchor="middle" font-size="12" fill="#30363a">22 Feb</text>
<text x="617.7" y="200.3" text-anchor="middle" font-size="12" fill="#30363a">23 Feb</text>
<text x="664.0" y="200.3" text-anchor="middle" font-size="12" fill="#30363a">24 Feb</text>
<text x="710.3" y="200.3" text-anchor="middle" font-size="12" fill="#30363a">25 Feb</text>
<text x="756.7" y="200.3" text-anchor="middle" font-size="12" fill="#30363a">26 Feb</text>
<text x="803.0" y="200.3" text-anchor="middle" font-size="12" fill="#30363a">27 Feb</text>
<text x="849.3" y="200.3" text-anchor="middle" font-size="12" fill="#30363a">28 Feb</text>
<text x="895.7" y="200.3" text-anchor="middle" font-size="12" fill="#30363a" font-weight="bold">Mar '25</text>
<text x="988.3" y="200.3" text-anchor="middle" font-size="12" fill="#30363a">03 Mar</text>
<text x="1034.7" y="200.3" text-anchor="middle" font-size="12" fill="#30363a">04 Mar</text>
<text x="1081.0" y="200.3" text-anchor="middle" font-size="12" fill="#30363a">05 Mar</text>
<text x="1127.3" y="200.3" text-anchor="middle" font-size="12" fill="#30363a">06 Mar</text>
<text x="1173.7" y="200.3" text-anchor="middle" font-size="12" fill="#30363a">07 Mar</text>
<text x="1220.0" y="200.3" text-anchor="middle" font-size="12" fill="#30363a">08 Mar</text>
<text x="1266.3" y="200.3" text-anchor="middle" font-size="12" fill="#30363a">09 Mar</text>
<text x="1312.7" y="200.3" text-anchor="middle" font-size="12" fill="#30363a">10 Mar</text>
<path d="M108.0 175.7 V181.7 M154.3 175.7 V181.7 M200.7 175.7 V181.7 M247.0 175.7 V181.7 M293.3 175.7 V181.7 M339.7 175.7 V181.7 M386.0 175.7 V181.7 M432.3 175.7 V181.7 M478.7 175.7 V181.7 M525.0 175.7 V181.7 M571.3 175.7 V181.7 M617.7 175.7 V181.7 M664.0 175.7 V181.7 M710.3 175.7 V181.7 M756.7 175.7 V181.7 M803.0 175.7 V181.7 M849.3 175.7 V181.7 M895.7 175.7 V181.7 M988.3 175.7 V181.7 M1034.7 175.7 V181.7 M1081.0 175.7 V181.7 M1127.3 175.7 V181.7 M1173.7 175.7 V181.7 M1220.0 175.7 V181.7 M1266.3 175.7 V181.7 M1312.7 175.7 V181.7" stroke="#dcdcdc" stroke-width="1" fill="none"/>
<rect x="76.2" y="23.2" width="13.5" height="13.3" rx="2" fill="#18a0e6"/><rect x="80.4" y="23.2" width="13.7" height="13.3" rx="2" fill="#18a0e6"/><path d="M80.7 24.7 V35.0" stroke="#7cc9f0" stroke-width="0.7"/><text x="87.0" y="34.5" text-anchor="middle" font-size="13" fill="#fff" stroke="#18a0e6" stroke-width=".2">P</text><rect x="130.7" y="23.2" width="13.5" height="13.3" rx="2" fill="#18a0e6"/><text x="137.3" y="34.5" text-anchor="middle" font-size="13" fill="#fff" stroke="#18a0e6" stroke-width=".2">P</text><rect x="127.0" y="23.8" width="7.6" height="12.1" rx="1.500" fill="#6c96cf"/><path d="M127.6 27.9 h7.2 v2.400 h-7.2 z" fill="#41506a"/><path d="M128.2 28.9 h5.2" stroke="#eef2f8" stroke-width="1.100"/><path d="M135.0 25.5 q2.200 4.300 -0.400 8.600" stroke="#1d222c" stroke-width="1.700" fill="none"/><rect x="144.8" y="23.2" width="13.0" height="13.3" rx="2" fill="#18a0e6"/><path d="M145.1 24.7 V35.0" stroke="#7cc9f0" stroke-width="0.7"/><text x="151.4" y="34.5" text-anchor="middle" font-size="13" fill="#fff" stroke="#18a0e6" stroke-width=".2">P</text><rect x="164.0" y="23.2" width="13.5" height="13.3" rx="2" fill="#18a0e6"/><text x="170.6" y="34.5" text-anchor="middle" font-size="13" fill="#fff" stroke="#18a0e6" stroke-width=".2">P</text><rect x="172.0" y="23.2" width="13.5" height="13.3" rx="2" fill="#18a0e6"/><path d="M172.3 24.7 V35.0" stroke="#7cc9f0" stroke-width="0.7"/><rect x="175.5" y="23.2" width="13.6" height="13.3" rx="2" fill="#18a0e6"/><path d="M175.8 24.7 V35.0" stroke="#7cc9f0" stroke-width="0.7"/><text x="183.0" y="34.5" text-anchor="middle" font-size="13" fill="#fff" stroke="#18a0e6" stroke-width=".2">P</text><rect x="223.8" y="23.2" width="13.5" height="13.3" rx="2" fill="#18a0e6"/><rect x="228.3" y="23.2" width="13.5" height="13.3" rx="2" fill="#18a0e6"/><path d="M228.6 24.7 V35.0" stroke="#7cc9f0" stroke-width="0.7"/><text x="234.9" y="34.5" text-anchor="middle" font-size="13" fill="#fff" stroke="#18a0e6" stroke-width=".2">P</text><rect x="355.9" y="23.2" width="13.5" height="13.3" rx="2" fill="#18a0e6"/><rect x="359.3" y="23.2" width="13.5" height="13.3" rx="2" fill="#18a0e6"/><text x="366.0" y="34.5" text-anchor="middle" font-size="13" fill="#fff" stroke="#18a0e6" stroke-width=".2">P</text><rect x="458.7" y="23.2" width="13.0" height="13.3" rx="2" fill="#18a0e6"/><text x="465.3" y="34.5" text-anchor="middle" font-size="13" fill="#fff" stroke="#18a0e6" stroke-width=".2">P</text><rect x="453.0" y="23.8" width="12.4" height="12.1" rx="1.500" fill="#6c96cf"/><path d="M453.6 27.9 h12.0 v2.400 h-12.0 z" fill="#41506a"/><path d="M454.2 28.9 h10.0" stroke="#eef2f8" stroke-width="1.100"/><path d="M465.8 25.5 q2.200 4.300 -0.400 8.600" stroke="#1d222c" stroke-width="1.700" fill="none"/><circle cx="498.7" cy="29.2" r="3.600" fill="#cfe0f4" stroke="#2a2f3a" stroke-width="1.700"/><circle cx="495.3" cy="25.3" r="1.400" fill="#5b90d8"/><path d="M496.2 28.9 h5 l-2.500 3 z" fill="#5b90d8"/><path d="M501.3 32.2 l2 2.300" stroke="#5b90d8" stroke-width="2.200" stroke-linecap="round"/><rect x="514.9" y="23.2" width="13.0" height="13.3" rx="2" fill="#18a0e6"/><text x="521.6" y="34.5" text-anchor="middle" font-size="13" fill="#fff" stroke="#18a0e6" stroke-width=".2">P</text><rect x="542.2" y="23.2" width="13.5" height="13.3" rx="2" fill="#18a0e6"/><rect x="547.6" y="23.2" width="13.5" height="13.3" rx="2" fill="#18a0e6"/><text x="554.9" y="34.5" text-anchor="middle" font-size="13" fill="#fff" stroke="#18a0e6" stroke-width=".2">P</text><rect x="538.1" y="23.8" width="8.4" height="12.1" rx="1.500" fill="#6c96cf"/><path d="M538.7 27.9 h8.0 v2.400 h-8.0 z" fill="#41506a"/><path d="M539.3 28.9 h6.0" stroke="#eef2f8" stroke-width="1.100"/><path d="M546.9 25.5 q2.200 4.300 -0.400 8.600" stroke="#1d222c" stroke-width="1.700" fill="none"/><rect x="732.4" y="23.2" width="13.5" height="13.3" rx="2" fill="#18a0e6"/><rect x="735.0" y="23.2" width="13.3" height="13.3" rx="2" fill="#18a0e6"/><text x="741.9" y="34.5" text-anchor="middle" font-size="13" fill="#fff" stroke="#18a0e6" stroke-width=".2">P</text><rect x="776.3" y="23.2" width="13.5" height="13.3" rx="2" fill="#18a0e6"/><rect x="778.0" y="23.2" width="13.2" height="13.3" rx="2" fill="#18a0e6"/><text x="785.0" y="34.5" text-anchor="middle" font-size="13" fill="#fff" stroke="#18a0e6" stroke-width=".2">P</text><rect x="815.3" y="23.2" width="13.5" height="13.3" rx="2" fill="#18a0e6"/><text x="823.0" y="34.5" text-anchor="middle" font-size="13" fill="#fff" stroke="#18a0e6" stroke-width=".2">P</text><rect x="822.4" y="23.2" width="13.5" height="13.3" rx="2" fill="#18a0e6"/><text x="829.6" y="34.5" text-anchor="middle" font-size="13" fill="#fff" stroke="#18a0e6" stroke-width=".2">P</text><rect x="828.6" y="23.2" width="13.5" height="13.3" rx="2" fill="#18a0e6"/><text x="835.5" y="34.5" text-anchor="middle" font-size="13" fill="#fff" stroke="#18a0e6" stroke-width=".2">P</text><rect x="833.3" y="23.2" width="13.2" height="13.3" rx="2" fill="#18a0e6"/><text x="840.0" y="34.5" text-anchor="middle" font-size="13" fill="#fff" stroke="#18a0e6" stroke-width=".2">P</text><rect x="864.9" y="23.2" width="13.5" height="13.3" rx="2" fill="#18a0e6"/><rect x="869.5" y="23.2" width="13.5" height="13.3" rx="2" fill="#18a0e6"/><text x="876.8" y="34.5" text-anchor="middle" font-size="13" fill="#fff" stroke="#18a0e6" stroke-width=".2">P</text><rect x="866.8" y="23.8" width="7.9" height="12.1" rx="1.500" fill="#6c96cf"/><path d="M867.4 27.9 h7.5 v2.400 h-7.5 z" fill="#41506a"/><path d="M868.0 28.9 h5.5" stroke="#eef2f8" stroke-width="1.100"/><path d="M875.1 25.5 q2.200 4.300 -0.400 8.600" stroke="#1d222c" stroke-width="1.700" fill="none"/><rect x="1014.2" y="23.2" width="13.5" height="13.3" rx="2" fill="#18a0e6"/><rect x="1018.4" y="23.2" width="13.5" height="13.3" rx="2" fill="#18a0e6"/><path d="M1018.7 24.7 V35.0" stroke="#7cc9f0" stroke-width="0.7"/><text x="1025.5" y="34.5" text-anchor="middle" font-size="13" fill="#fff" stroke="#18a0e6" stroke-width=".2">P</text><rect x="1051.0" y="23.2" width="13.5" height="13.3" rx="2" fill="#18a0e6"/><text x="1057.4" y="34.5" text-anchor="middle" font-size="13" fill="#fff" stroke="#18a0e6" stroke-width=".2">P</text><rect x="1061.2" y="23.2" width="13.5" height="13.3" rx="2" fill="#18a0e6"/><text x="1068.0" y="34.5" text-anchor="middle" font-size="13" fill="#fff" stroke="#18a0e6" stroke-width=".2">P</text><rect x="1091.2" y="23.2" width="13.5" height="13.3" rx="2" fill="#18a0e6"/><text x="1097.8" y="34.5" text-anchor="middle" font-size="13" fill="#fff" stroke="#18a0e6" stroke-width=".2">P</text><rect x="1104.5" y="23.8" width="10.7" height="12.1" rx="1.500" fill="#6c96cf"/><path d="M1105.1 27.9 h10.3 v2.400 h-10.3 z" fill="#41506a"/><path d="M1105.7 28.9 h8.3" stroke="#eef2f8" stroke-width="1.100"/><path d="M1115.6 25.5 q2.200 4.300 -0.400 8.600" stroke="#1d222c" stroke-width="1.700" fill="none"/><rect x="1146.7" y="23.2" width="13.5" height="13.3" rx="2" fill="#18a0e6"/><rect x="1151.2" y="23.2" width="13.5" height="13.3" rx="2" fill="#18a0e6"/><text x="1159.4" y="34.5" text-anchor="middle" font-size="13" fill="#fff" stroke="#18a0e6" stroke-width=".2">P</text><circle cx="1152.6" cy="29.2" r="3.600" fill="#cfe0f4" stroke="#2a2f3a" stroke-width="1.700"/><circle cx="1149.2" cy="25.3" r="1.400" fill="#5b90d8"/><path d="M1150.1 28.9 h5 l-2.500 3 z" fill="#5b90d8"/><path d="M1155.2 32.2 l2 2.300" stroke="#5b90d8" stroke-width="2.200" stroke-linecap="round"/><rect x="1183.8" y="23.2" width="13.5" height="13.3" rx="2" fill="#18a0e6"/><text x="1190.2" y="34.5" text-anchor="middle" font-size="13" fill="#fff" stroke="#18a0e6" stroke-width=".2">P</text><rect x="1195.5" y="23.2" width="13.5" height="13.3" rx="2" fill="#18a0e6"/><text x="1202.6" y="34.5" text-anchor="middle" font-size="13" fill="#fff" stroke="#18a0e6" stroke-width=".2">P</text><rect x="1321.5" y="23.2" width="14.0" height="13.3" rx="2" fill="#18a0e6"/><text x="1328.3" y="34.5" text-anchor="middle" font-size="13" fill="#fff" stroke="#18a0e6" stroke-width=".2">P</text>
<circle cx="595" cy="215.0" r="6" fill="#0a8ffa"/>
<text x="604" y="219.3" font-size="12" fill="#30363a">Speed</text>
<circle cx="655" cy="215.0" r="6" fill="#0be195"/>
<text x="664" y="219.3" font-size="12" fill="#30363a">FLS</text>
<circle cx="702" cy="215.0" r="6" fill="#feb019"/>
<text x="711" y="219.3" font-size="12" fill="#30363a">FLS(filter)</text>
<g fill="none" stroke="#6e8192" stroke-width="1.3"><circle cx="1201.400" cy="11.4" r="6.200"/><path d="M1197.900 11.4 h7 M1201.400 7.9 v7"/><circle cx="1221.600" cy="11.4" r="6.200"/><path d="M1218.100 11.4 h7"/></g><g fill="none" stroke="#0a8df6" stroke-width="1.600"><circle cx="1242.400" cy="9.8" r="5.100"/><path d="M1245.900 13.6 L1250.800 18.4" stroke-linecap="round" stroke-width="2.200"/><path d="M1240.300 9.8 h4 M1242.300 7.8 v4" stroke-width="1.200"/></g><path transform="translate(1259.4 5.1) scale(.84)" d="M4.500 10.500 c-1.500 -1.800 -3.200 -3.200 -4.200 -2.500 c-1 .8 .6 2.600 1.800 4.200 l3.200 4.300 h7.400 c1.200 -2 1.800 -4 1.800 -6.500 v-5.800 c0 -1.300 -1.900 -1.300 -1.900 0 v3.400 v-5.600 c0 -1.300 -2 -1.300 -2 0 v5 v-5.900 c0 -1.400 -2.100 -1.400 -2.100 0 v5.900 v-4.900 c0 -1.300 -2 -1.300 -2 0 z" fill="none" stroke="#6e8192" stroke-width="1.300" stroke-linejoin="round"/><path d="M1277 7.2 h15.200 M1277 11.6 h15.200 M1277 16.1 h15.200" stroke="#6e8192" stroke-width="1.900" fill="none"/><text x="1299" y="15.6" font-size="12" fill="#6e8192" textLength="20.300" lengthAdjust="spacingAndGlyphs">ALL</text>
</svg>
<div class="bar" style="top:718px;height:35px"></div>
<div class="ttl" style="top:729px">MAP</div>
<div class="wb" style="left:1185px;top:728px"></div><svg class="abs" style="left:1185px;top:728px" width="18" height="15" viewBox="0.5 0 18 15"><path d="M5.5 3.5 L13.5 11.5 M13.5 3.5 L5.5 11.5" stroke="#fff" stroke-width="1.3" fill="none"/></svg><div class="wb" style="left:1209px;top:728px"></div><svg class="abs" style="left:1209px;top:728px" width="18" height="15" viewBox="0.5 0 18 15"><path d="M4 4.2 H15 M4 7.5 H15 M4 10.8 H15" stroke="#fff" stroke-width="1.8" fill="none"/></svg><div class="wb" style="left:1233px;top:728px"></div><svg class="abs" style="left:1233px;top:728px" width="18" height="15" viewBox="0.5 0 18 15"><rect x="3.5" y="3" width="12" height="3.6" fill="#fff"/><rect x="3.5" y="8.4" width="12" height="3.6" fill="#fff"/></svg><div class="wb" style="left:1257px;top:728px"></div><svg class="abs" style="left:1257px;top:728px" width="18" height="15" viewBox="0.5 0 18 15"><rect x="3.5" y="3" width="12" height="9" rx="1" fill="#fff"/></svg>
<svg class="abs" style="left:2px;top:753px" width="1350" height="113" viewBox="2 0 1350 113" font-family="Liberation Sans, sans-serif">
<defs><filter id="fo" x="0" y="0" width="100%" height="100%" color-interpolation-filters="sRGB"><feTurbulence type="fractalNoise" baseFrequency="0.075 0.085" numOctaves="5" seed="11" result="n"/><feColorMatrix in="n" type="matrix" values="0 0 0 0 0  0 0 0 0 0  0 0 0 0 0  1 0 0 0 0" result="na"/><feComposite in="na" in2="SourceGraphic" operator="arithmetic" k1="0" k2="16" k3="1.15" k4="-8.75" result="t"/><feColorMatrix in="t" type="matrix" values="0 0 0 0 0.705  0 0 0 0 0.845  0 0 0 0 0.655  0 0 0 1 0"/></filter><linearGradient id="gd" x1="0" x2="1" y1="0" y2="0"><stop offset="0" stop-opacity=".12"/><stop offset=".22" stop-opacity=".1"/><stop offset=".3" stop-opacity=".3"/><stop offset=".42" stop-opacity=".5"/><stop offset=".55" stop-opacity=".55"/><stop offset=".62" stop-opacity=".9"/><stop offset=".72" stop-opacity=".85"/><stop offset=".78" stop-opacity=".6"/><stop offset=".86" stop-opacity=".4"/><stop offset=".93" stop-opacity=".75"/><stop offset="1" stop-opacity=".85"/></linearGradient><filter id="fb" x="0" y="0" width="100%" height="100%" color-interpolation-filters="sRGB"><feTurbulence type="fractalNoise" baseFrequency="0.04 0.05" numOctaves="4" seed="5"/><feColorMatrix type="matrix" values="0 0 0 0 0.95  0 0 0 0 0.94  0 0 0 0 0.915  0 14 0 0 -6.5"/></filter><filter id="fl" x="0" y="0" width="100%" height="100%" color-interpolation-filters="sRGB"><feTurbulence type="fractalNoise" baseFrequency="0.06 0.07" numOctaves="3" seed="23"/><feColorMatrix type="matrix" values="0 0 0 0 0.80  0 0 0 0 0.92  0 0 0 0 0.69  0 0 14 0 -7.6"/></filter><linearGradient id="gm" x1="0" x2="1" y1="0" y2="0"><stop offset="0" stop-color="#f0efe2"/><stop offset="0.25" stop-color="#eef0d8"/><stop offset="0.5" stop-color="#edf0d6"/><stop offset="0.75" stop-color="#eaeedb"/><stop offset="1" stop-color="#e9eedc"/></linearGradient><linearGradient id="gb" x1="0" x2="1" y1="0" y2="0"><stop offset="0" stop-color="#fff"/><stop offset=".23" stop-color="#fff"/><stop offset=".29" stop-color="#444"/><stop offset=".47" stop-color="#444"/><stop offset=".54" stop-color="#ddd"/><stop offset="1" stop-color="#eee"/></linearGradient><mask id="mb" maskUnits="userSpaceOnUse" x="0" y="0" width="1352" height="113"><rect x="0" y="0" width="1352" height="113" fill="url(#gb)"/></mask></defs>
<rect x="0" y="0" width="1352" height="113" fill="url(#gm)"/>
<rect x="0" y="0" width="1352" height="113" filter="url(#fl)" opacity="0.8"/>
<g mask="url(#mb)"><rect x="0" y="0" width="1352" height="113" filter="url(#fb)"/></g>
<rect x="0" y="0" width="1352" height="113" fill="url(#gd)" filter="url(#fo)"/>
<path d="M488.1 19.6 L510.6 20.8 L515.7 34.6 L513.1 59.7 L500.6 72.3 L490.6 79.8 L480.5 72.3 L490.6 47.2 L488.1 34.6 Z" fill="#add19e" opacity=".45"/>
<path d="M820.5 72.3 L840.6 69.8 L855.7 79.8 L860.7 97.4 L855.7 112.9 L820.5 112.9 L815.5 92.4 Z" fill="#add19e" opacity=".9"/>
<path d="M994.9 72.3 L1007.5 57.2 L1020.0 59.7 L1030.1 67.3 L1040.1 84.8 L1030.1 97.4 L1025.0 112.9 L992.4 112.9 Z" fill="#add19e" opacity=".85"/>
<path d="M321.1 10.0 L341.2 5.0 L351.2 20.1 L363.8 25.1 L358.8 40.1 L351.2 50.2 L326.1 55.2 L323.6 65.2 L321.1 75.3 L301.1 85.3 L296.0 60.2 L301.1 40.1 L316.1 30.1 Z" fill="#add19e" fill-opacity=".4" stroke="#8cc47e" stroke-width="1.100" stroke-linejoin="round"/>
<path d="M0.0 30.1 L15.1 25.1 L25.1 40.1 L20.1 60.2 L10.0 70.2 L0.0 75.3 Z" fill="#add19e" fill-opacity=".55"/>
<path d="M1165.6 24.6 L1180.6 25.9 L1190.7 32.1 L1199.4 43.4 L1195.7 51.0 L1188.1 57.2 L1189.4 64.8 L1181.9 69.8 L1165.6 74.8 L1155.5 78.6 L1145.5 79.8 L1141.7 69.8 L1139.2 58.5 L1145.5 51.0 L1151.8 44.7 L1160.5 42.2 Z" fill="#dbe5ad" stroke="#9fcb8c" stroke-width="1.6" stroke-linejoin="round"/>
<path d="M1195.7 82.3 L1208.2 79.8 L1212.0 89.8 L1208.2 99.9 L1198.2 102.4 L1190.7 94.9 Z" fill="#dbe5ad" opacity=".9"/>
<path d="M1091.5 24.6 L1100.3 22.1 L1116.6 24.6 L1117.9 33.4 L1100.3 37.2 L1090.3 33.4 Z" fill="#dbe5ad" opacity=".8"/>
<ellipse cx="930.9" cy="29.6" rx="12.0" ry="5.0" fill="#aad3df" transform="rotate(-10 930.9 29.6)"/>
<ellipse cx="920.9" cy="38.4" rx="7.0" ry="2.5" fill="#aad3df" transform="rotate(0 920.9 38.4)"/>
<ellipse cx="880.8" cy="43.4" rx="12.0" ry="4.0" fill="#aad3df" transform="rotate(-15 880.8 43.4)"/>
<ellipse cx="905.8" cy="34.6" rx="8.0" ry="3.0" fill="#aad3df" transform="rotate(-20 905.8 34.6)"/>
<ellipse cx="870.7" cy="24.6" rx="4.0" ry="3.0" fill="#aad3df" transform="rotate(0 870.7 24.6)"/>
<ellipse cx="776.6" cy="34.6" rx="4.0" ry="5.0" fill="#aad3df" transform="rotate(0 776.6 34.6)"/>
<ellipse cx="701.3" cy="68.5" rx="5.0" ry="5.0" fill="#aad3df" transform="rotate(0 701.3 68.5)"/>
<ellipse cx="865.7" cy="44.7" rx="5.0" ry="2.0" fill="#aad3df" transform="rotate(20 865.7 44.7)"/>
<ellipse cx="1080.2" cy="34.6" rx="4.0" ry="4.0" fill="#aad3df" transform="rotate(30 1080.2 34.6)"/>
<ellipse cx="1072.7" cy="43.4" rx="6.0" ry="2.0" fill="#aad3df" transform="rotate(-10 1072.7 43.4)"/>
<ellipse cx="1022.5" cy="12.1" rx="8.0" ry="4.0" fill="#aad3df" transform="rotate(0 1022.5 12.1)"/>
<ellipse cx="1017.5" cy="4.5" rx="5.0" ry="3.0" fill="#aad3df" transform="rotate(0 1017.5 4.5)"/>
<ellipse cx="1175.6" cy="49.7" rx="4.0" ry="1.5" fill="#aad3df" transform="rotate(-40 1175.6 49.7)"/>
<ellipse cx="1018.8" cy="77.3" rx="3.0" ry="3.0" fill="#aad3df" transform="rotate(0 1018.8 77.3)"/>
<ellipse cx="569.6" cy="91.1" rx="3.0" ry="2.0" fill="#aad3df" transform="rotate(30 569.6 91.1)"/>
<ellipse cx="163.1" cy="5.8" rx="3.0" ry="6.0" fill="#aad3df" transform="rotate(0 163.1 5.8)"/>
<path d="M25.1 7.0 L32.6 22.1 L27.6 42.2 L15.1 54.7 L17.6 72.3 L7.5 84.8 M105.4 12.1 L117.9 27.1 L90.3 39.7 L82.8 54.7 L100.4 69.8 L117.9 79.8 M208.3 9.5 L225.8 24.6 L240.9 49.7 L253.5 59.7 M301.1 34.6 L313.7 62.2 L308.7 79.8 L323.7 89.8 L336.3 107.4 M372.6 12.1 L392.7 32.1 L402.7 62.2 L400.2 92.4 L405.2 112.9 M500.6 4.5 L490.6 24.6 L488.1 44.7 L480.5 69.8 L475.5 92.4 L473.0 112.9 M580.9 37.2 L583.4 54.7 L606.0 67.3 L628.6 84.8 L636.1 102.4 M651.2 9.5 L663.7 22.1 L676.3 29.6 M641.1 92.4 L661.2 87.3 L676.3 97.4 M687.5 19.6 L700.1 32.1 L695.1 47.2 L705.1 62.2 M956.0 34.6 L963.6 54.7 L976.1 72.3 L981.1 92.4 L996.2 107.4 M1042.6 2.0 L1037.6 19.6 L1025.0 29.6 L1030.1 52.2 M1155.5 2.0 L1165.6 12.1 L1163.1 22.1 M1180.6 2.0 L1205.7 19.6 L1215.8 34.6 L1235.8 49.7 L1248.4 62.2 L1265.9 79.8 L1278.5 97.4 L1291.0 112.9 M1115.4 102.4 L1140.5 92.4 L1155.5 84.8 L1180.6 72.3 L1205.7 69.8 L1228.3 57.2 M1220.8 87.3 L1235.8 82.3 L1253.4 72.3 L1265.9 79.8 M1291.0 7.0 L1301.1 22.1 L1296.1 42.2 L1311.1 54.7 L1331.2 47.2 L1348.8 39.7 M1250.9 2.0 L1265.9 12.1 L1286.0 9.5 L1301.1 22.1" fill="none" stroke="#aad3df" stroke-width="1" stroke-linejoin="round"/>
<path d="M60.2 7.0 L65.2 24.6 L82.8 39.7 L70.3 54.7 L75.3 72.3 L82.8 94.9 L105.4 97.4 L110.4 112.9 M82.8 39.7 L100.4 34.6 L117.9 27.1 L130.5 17.1 L150.6 12.1 L160.6 14.6 L175.7 9.5 L190.7 7.0 L200.8 4.5 M190.7 7.0 L195.7 27.1 L193.2 44.7 L208.3 49.7 L215.8 64.8 L220.8 72.3 L215.8 82.3 L195.7 87.3 L175.7 84.8 L160.6 82.3 L150.6 97.4 L140.5 112.9 M220.8 72.3 L235.9 87.3 L233.4 97.4 L240.9 107.4 M235.9 72.3 L253.5 72.3 L271.0 79.8 L283.6 77.3 L298.6 69.8 L303.6 52.2 L321.2 49.7 L336.3 54.7 M0.0 72.3 L10.0 59.7 L30.1 62.2 L50.2 64.8 L60.2 57.2 L70.3 54.7 M476.8 0.8 L470.5 22.1 L452.9 32.1 L450.4 52.2 L435.4 57.2 L422.8 64.8 L405.2 72.3 L405.2 79.8 L387.7 69.8 L372.6 72.3 L365.1 67.3 L355.1 59.7 L347.5 54.7 L340.0 57.2 M450.4 52.2 L455.4 67.3 L463.0 72.3 L475.5 87.3 L490.6 89.8 L510.6 82.3 L530.7 89.8 L540.8 94.9 L548.3 107.4 L558.3 97.4 L568.4 92.4 L565.8 84.8 L588.4 84.8 L585.9 69.8 L590.9 37.2 L588.4 22.1 L603.5 14.6 L598.5 7.0 L606.0 0.8 M588.4 69.8 L601.0 69.8 L608.5 77.3 L606.0 87.3 L616.0 92.4 L611.0 112.9 M663.7 0.8 L666.2 9.5 L680.0 12.1 M387.7 69.8 L390.2 92.4 L385.2 102.4 L390.2 112.9 M680.0 7.0 L695.1 2.0 L705.1 0.8 M740.2 0.8 L737.7 27.1 L727.7 47.2 L730.2 67.3 L717.6 79.8 L715.1 97.4 L722.7 112.9 M785.4 0.8 L790.4 22.1 L800.5 34.6 L820.5 47.2 L828.1 62.2 L830.6 74.8 L820.5 72.3 L819.3 92.4 L830.6 97.4" fill="none" stroke="#c0a6c8" stroke-width="1.1" stroke-linejoin="round" opacity=".9"/>
<path d="M898.3 0.8 L905.8 7.0 L920.9 8.3 L946.0 12.1 L949.8 24.6 L947.3 34.6 L948.5 47.2 L946.0 54.7 L930.9 69.8 L933.5 82.3 L930.9 97.4 L920.9 112.9 M946.0 12.1 L951.0 4.5 L971.1 5.8 L991.2 2.0" fill="none" stroke="#b79fc4" stroke-width="3.2" stroke-linejoin="round" opacity=".75"/>
<path d="M898.3 0.8 L905.8 7.0 L920.9 8.3 L946.0 12.1 L949.8 24.6 L947.3 34.6 L948.5 47.2 L946.0 54.7 L930.9 69.8 L933.5 82.3 L930.9 97.4 L920.9 112.9 M946.0 12.1 L951.0 4.5 L971.1 5.8 L991.2 2.0" fill="none" stroke="#8d6b9a" stroke-width="0.9" stroke-linejoin="round" opacity=".8"/>
<path d="M90.3 2.0 L100.4 34.6 L97.9 47.2 L105.4 62.2 L140.5 74.8 L145.5 92.4 L144.3 112.9 M148.1 32.1 L165.6 44.7 L190.7 54.7 L205.8 67.3 L220.8 77.3 M0.0 2.0 L30.1 4.5 L62.7 2.0 L90.3 2.0 M140.5 74.8 L150.6 57.2 L145.5 42.2 L148.1 32.1 L160.6 19.6 L165.6 9.5 M7.5 82.3 L25.1 72.3 L40.2 64.8 L72.8 59.7 L102.9 53.5 M276.0 29.6 L291.1 37.2 L316.2 38.4 L340.0 37.2 M227.1 81.1 L230.9 97.4 L235.9 112.9 M321.2 42.2 L323.7 62.2 L313.7 79.8 L308.7 97.4 M519.4 9.5 L505.6 24.6 L490.6 52.2 L476.8 82.3 L468.0 112.9 M422.8 22.1 L410.3 34.6 L397.7 59.7 L372.6 72.3 L355.1 82.3 L340.0 94.9 M420.3 24.6 L427.8 67.3 L440.4 92.4 L450.4 107.4 M340.0 19.6 L355.1 14.6 L370.1 2.0 M540.8 4.5 L565.8 12.1 L580.9 29.6 L590.9 59.7 L598.5 92.4 L611.0 112.9 M575.9 22.1 L601.0 19.6 L611.0 34.6 L636.1 44.7 L656.2 57.2 L680.0 59.7 M651.2 2.0 L663.7 19.6 L661.2 37.2 L676.3 54.7 M638.6 92.4 L656.2 87.3 L680.0 72.3 M680.0 39.7 L695.1 27.1 L710.1 12.1 L725.2 0.8 M815.5 0.8 L835.6 12.1 L845.6 24.6 L855.7 39.7 L870.7 49.7 L880.8 54.7 M803.0 19.6 L800.5 34.6 L805.5 44.7 M890.8 12.1 L895.8 34.6 L920.9 42.2 L938.5 39.7 M742.7 79.8 L745.2 97.4 L742.7 112.9 M1020.0 22.1 L1003.7 37.2 L981.1 59.7 L961.1 79.8 L951.0 94.9 L956.0 112.9 M1015.0 32.1 L1045.1 30.9 L1077.7 29.6 L1090.3 38.4 L1122.9 34.6 L1165.6 22.1 L1195.7 24.6 L1210.7 37.2 L1223.3 47.2 L1240.8 59.7 L1276.0 69.8 L1316.1 84.8 M1125.4 29.6 L1145.5 17.1 L1155.5 2.0 M1120.4 37.2 L1100.3 67.3 L1095.3 97.4 L1102.8 112.9 M1032.6 57.2 L1047.6 79.8 L1077.7 102.4 L1102.8 109.9 M1205.7 0.8 L1233.3 17.1 L1243.4 32.1 L1265.9 34.6 L1293.5 39.7 L1316.1 59.7 L1351.3 58.5 M1303.6 0.8 L1311.1 29.6 L1316.1 59.7 L1336.2 77.3 L1316.1 89.8 L1291.0 97.4 L1265.9 107.4 M1316.1 59.7 L1303.6 72.3 L1316.1 84.8 L1336.2 77.3" fill="none" stroke="#f4c684" stroke-width="1.15" stroke-linejoin="round"/>
<path d="M283.6 -0.5 L250.9 47.2 L227.1 81.1 L198.2 107.4 L193.2 112.9 M538.2 0.8 L533.2 17.1 L525.7 59.7 L515.7 84.8 L498.1 112.9 M870.7 2.0 L843.1 19.6 L800.5 42.2 L772.8 59.7 L752.8 82.3 L747.8 112.9 M752.8 82.3 L717.6 79.8 L680.0 102.4 M651.2 112.9 L666.2 102.4 L680.0 99.9" fill="none" stroke="#f2aa8e" stroke-width="1.15" stroke-linejoin="round"/>
<path d="M1.3 0.0 L25.1 4.5 L45.2 8.3 L62.7 20.8 L100.4 33.4 L125.5 42.2 L143.0 51.0 L175.7 67.3 L200.8 73.5 L227.1 81.1 L250.9 97.4 L281.1 112.9 M515.7 0.8 L520.7 10.8 L538.2 22.1 L553.3 44.7 L578.4 64.8 L590.9 84.8 L601.0 112.9" fill="none" stroke="#e5728f" stroke-width="1.5" stroke-linejoin="round"/>
<path d="M340.0 0.8 L323.7 22.1 L308.7 47.2 L298.6 69.8 L266.0 94.9 L240.9 112.9 M412.8 0.8 L422.8 24.6 L425.3 47.2 L435.4 82.3 L450.4 109.9 M915.9 0.8 L910.9 22.1 L908.4 37.2 M905.8 54.7 L920.9 51.0 L938.5 42.2 L936.0 37.2 M875.7 79.8 L870.7 97.4 L865.7 107.4 M752.8 83.6 L750.3 92.4 L755.3 102.4 L775.4 112.9 M1115.4 0.8 L1125.4 27.1 L1115.4 47.2 L1109.1 72.3 L1112.9 97.4 L1102.8 112.9 M1233.3 0.8 L1265.9 22.1 L1293.5 37.2 L1316.1 54.7 L1341.2 74.8 L1351.3 67.3 M1288.5 62.2 L1306.1 77.3 L1321.1 87.3 M1341.2 74.8 L1321.1 87.3 L1291.0 97.4 L1265.9 112.9 M1341.2 74.8 L1351.3 78.6" fill="none" stroke="#777" stroke-width="0.9" stroke-linejoin="round"/>
<rect x="1122.9" y="28.4" width="9" height="8" rx="2" fill="#d9d6d2"/>
<rect x="1288.5" y="59.7" width="14" height="9" rx="2" fill="#d9d6d2"/>
<rect x="533.2" y="0.8" width="10" height="5" rx="2" fill="#dcd8d3"/>
<text x="260.0" y="3.0" font-size="10.6" fill="#8a6796" text-anchor="middle" letter-spacing="0" stroke="#fff" stroke-width="1.800" stroke-opacity=".65" paint-order="stroke"  textLength="35.0" lengthAdjust="spacingAndGlyphs">Kelmės</text>
<text x="260.0" y="14.6" font-size="10.6" fill="#8a6796" text-anchor="middle" letter-spacing="0" stroke="#fff" stroke-width="1.800" stroke-opacity=".65" paint-order="stroke"  textLength="30.0" lengthAdjust="spacingAndGlyphs">rajono</text>
<text x="260.0" y="26.0" font-size="10.6" fill="#8a6796" text-anchor="middle" letter-spacing="0" stroke="#fff" stroke-width="1.800" stroke-opacity=".65" paint-order="stroke"  textLength="53.6" lengthAdjust="spacingAndGlyphs">savivaldybė</text>
<text x="404.0" y="0.5" font-size="10.6" fill="#8a6796" text-anchor="middle" letter-spacing="0" stroke="#fff" stroke-width="1.800" stroke-opacity=".65" paint-order="stroke"  textLength="51.0" lengthAdjust="spacingAndGlyphs">Radviliškio</text>
<text x="404.0" y="12.6" font-size="10.6" fill="#8a6796" text-anchor="middle" letter-spacing="0" stroke="#fff" stroke-width="1.800" stroke-opacity=".65" paint-order="stroke"  textLength="30.0" lengthAdjust="spacingAndGlyphs">rajono</text>
<text x="404.0" y="24.0" font-size="10.6" fill="#8a6796" text-anchor="middle" letter-spacing="0" stroke="#fff" stroke-width="1.800" stroke-opacity=".65" paint-order="stroke"  textLength="53.6" lengthAdjust="spacingAndGlyphs">savivaldybė</text>
<text x="4.5" y="103.8" font-size="10.6" fill="#8a6796" text-anchor="start" letter-spacing="0" stroke="#fff" stroke-width="1.800" stroke-opacity=".65" paint-order="stroke"  textLength="31.5" lengthAdjust="spacingAndGlyphs">Šilutės</text>
<text x="4.5" y="115.5" font-size="10.6" fill="#8a6796" text-anchor="start" letter-spacing="0" stroke="#fff" stroke-width="1.800" stroke-opacity=".65" paint-order="stroke"  textLength="30.0" lengthAdjust="spacingAndGlyphs">rajono</text>
<text x="178.0" y="114.3" font-size="11.3" fill="#8a6796" text-anchor="middle" letter-spacing="0" stroke="#fff" stroke-width="1.800" stroke-opacity=".65" paint-order="stroke" font-style="italic" textLength="43.0" lengthAdjust="spacingAndGlyphs">Tauragės</text>
<text x="320.0" y="103.6" font-size="10.6" fill="#8a6796" text-anchor="middle" letter-spacing="0" stroke="#fff" stroke-width="1.800" stroke-opacity=".65" paint-order="stroke"  textLength="39.0" lengthAdjust="spacingAndGlyphs">Raseinių</text>
<text x="320.0" y="115.3" font-size="10.6" fill="#8a6796" text-anchor="middle" letter-spacing="0" stroke="#fff" stroke-width="1.800" stroke-opacity=".65" paint-order="stroke"  textLength="30.0" lengthAdjust="spacingAndGlyphs">rajono</text>
<text x="470.0" y="114.3" font-size="11" fill="#8a6796" text-anchor="middle" letter-spacing="0" stroke="#fff" stroke-width="1.800" stroke-opacity=".65" paint-order="stroke"  textLength="40.0" lengthAdjust="spacingAndGlyphs">Kėdainių</text>
<text x="657.5" y="52.2" font-size="10.6" fill="#8a6796" text-anchor="middle" letter-spacing="0" stroke="#fff" stroke-width="1.800" stroke-opacity=".65" paint-order="stroke"  textLength="41.0" lengthAdjust="spacingAndGlyphs">Anykščių</text>
<text x="657.5" y="63.3" font-size="10.6" fill="#8a6796" text-anchor="middle" letter-spacing="0" stroke="#fff" stroke-width="1.800" stroke-opacity=".65" paint-order="stroke"  textLength="30.0" lengthAdjust="spacingAndGlyphs">rajono</text>
<text x="657.5" y="75.3" font-size="10.6" fill="#8a6796" text-anchor="middle" letter-spacing="0" stroke="#fff" stroke-width="1.800" stroke-opacity=".65" paint-order="stroke"  textLength="53.6" lengthAdjust="spacingAndGlyphs">savivaldybė</text>
<text x="766.3" y="78.5" font-size="11.5" fill="#8a6796" text-anchor="middle" letter-spacing="0" stroke="#fff" stroke-width="1.800" stroke-opacity=".65" paint-order="stroke" font-style="italic" textLength="77.3" lengthAdjust="spacingAndGlyphs">Utenos apskritis</text>
<text x="841.0" y="111.3" font-size="10.8" fill="#35912f" text-anchor="middle" letter-spacing="0" stroke="#fff" stroke-width="1.800" stroke-opacity=".65" paint-order="stroke" font-style="italic" textLength="55.0" lengthAdjust="spacingAndGlyphs">Aukštaitijos</text>
<text x="1021.0" y="35.7" font-size="10.3" fill="#35912f" text-anchor="middle" letter-spacing="0" stroke="#fff" stroke-width="1.800" stroke-opacity=".65" paint-order="stroke" font-style="italic" textLength="67.3" lengthAdjust="spacingAndGlyphs">Нацыянальны</text>
<text x="1021.0" y="46.8" font-size="10.3" fill="#35912f" text-anchor="middle" letter-spacing="0" stroke="#fff" stroke-width="1.800" stroke-opacity=".65" paint-order="stroke" font-style="italic" textLength="83.7" lengthAdjust="spacingAndGlyphs">парк «Браслаўскія</text>
<text x="1021.3" y="58.2" font-size="10.3" fill="#35912f" text-anchor="middle" letter-spacing="0" stroke="#fff" stroke-width="1.800" stroke-opacity=".65" paint-order="stroke" font-style="italic" textLength="33.0" lengthAdjust="spacingAndGlyphs">азёры»</text>
<path d="M907.1 42.2 L898.3 51.0 L893.3 59.7 L880.8 71.0 L865.7 84.8 L859.4 93.6 L858.7 112.9" fill="none" stroke="#2f86e0" stroke-width="4" stroke-linejoin="round" stroke-linecap="round"/>
<rect x="878.700" y="68.5" width="97" height="19" rx="2.500" fill="#2f86e0" opacity=".95"/>
<text x="880" y="77.3" font-size="10.500" font-weight="bold" fill="#fff" stroke="#fff" stroke-width=".3" textLength="94" lengthAdjust="spacingAndGlyphs">2025-02-20 17:44:34</text>
<text x="880" y="86.6" font-size="10.500" font-weight="bold" fill="#fff" stroke="#fff" stroke-width=".3" textLength="38" lengthAdjust="spacingAndGlyphs">35 km/h</text>
<path d="M0 -7 L6.300 5.500 L0 2.600 L-6.300 5.500 Z" fill="#2f86e0" stroke="#fff" stroke-width="1.200" stroke-linejoin="round" transform="translate(909.4 42.2) rotate(170)"/>
<path d="M0 -7 L6.300 5.500 L0 2.600 L-6.300 5.500 Z" fill="#2f86e0" stroke="#fff" stroke-width="1.200" stroke-linejoin="round" transform="translate(897.3 52.2) rotate(-105)"/>
<path d="M0 -7 L6.300 5.500 L0 2.600 L-6.300 5.500 Z" fill="#2f86e0" stroke="#fff" stroke-width="1.200" stroke-linejoin="round" transform="translate(880.3 69.3) rotate(-100)"/>
<path d="M0 -7 L6.300 5.500 L0 2.600 L-6.300 5.500 Z" fill="#2f86e0" stroke="#fff" stroke-width="1.200" stroke-linejoin="round" transform="translate(858.7 92.4) rotate(-95)"/>
<path d="M0 -7 L6.300 5.500 L0 2.600 L-6.300 5.500 Z" fill="#2f86e0" stroke="#fff" stroke-width="1.200" stroke-linejoin="round" transform="translate(861.2 111.9) rotate(-100)"/>
<rect x="38.600" y="10.5" width="24" height="48.500" fill="rgba(0,0,0,.15)"/>
<rect x="38.100" y="9.5" width="24" height="24.0" fill="#fff" stroke="rgba(0,0,0,.12)" stroke-width="1"/>
<rect x="38.100" y="33.9" width="24" height="24.0" fill="#fff" stroke="rgba(0,0,0,.12)" stroke-width="1"/>
<path d="M45.300 20.2 h9.800 M50.200 15.3 v9.800" stroke="#13263f" stroke-width="1.600"/>
<path d="M45.800 43.8 h9" stroke="#13263f" stroke-width="1.700"/>
<rect x="38.600" y="69.0" width="24" height="24.400" fill="rgba(0,0,0,.15)"/>
<rect x="38.100" y="68.0" width="24" height="24.0" fill="#fff" stroke="rgba(0,0,0,.12)" stroke-width="1"/>
<path d="M43 79.3 h11.500" stroke="#13263f" stroke-width="1.100" stroke-dasharray="2.600 1.400"/><path d="M53.200 76.0 l4 3.300 l-4 3.300" fill="none" stroke="#13263f" stroke-width="1.100"/>
<rect x="38.100" y="102.2" width="24" height="12.0" fill="#fff" stroke="rgba(0,0,0,.12)" stroke-width="1"/>
<path d="M43.400 111.5 L50.500 107.4 L56.400 111.5" fill="none" stroke="#1d3f68" stroke-width="1.200"/>
<rect x="49.1" y="106.0" width="2.800" height="2.800" fill="#fff" stroke="#1d3f68" stroke-width="1"/>
<rect x="42.0" y="110.1" width="2.800" height="2.800" fill="#fff" stroke="#1d3f68" stroke-width="1"/>
<rect x="55.0" y="110.1" width="2.800" height="2.800" fill="#fff" stroke="#1d3f68" stroke-width="1"/>
</svg>
<div class="abs" style="left:0;top:0;width:1.2px;height:866px;background:#2a5b8f"></div>
<div class="abs" style="left:1352px;top:433px;width:3px;height:218px;background:#152e49"></div>
<div class="abs" style="left:1352px;top:651px;width:3px;height:215px;background:#4285c8"></div>
<div class="abs" style="left:1322px;top:15px;width:33px;height:432px;background:#204a75">
<svg class="abs" style="left:0;top:0" width="33" height="432" viewBox="0 0 33 432"><path d="M0 35.5 H33" stroke="#1a3d63" stroke-width="1"/><path d="M0 71.5 H33" stroke="#1a3d63" stroke-width="1"/><path d="M0 107.5 H33" stroke="#1a3d63" stroke-width="1"/><path d="M0 143.5 H33" stroke="#1a3d63" stroke-width="1"/><path d="M0 179.5 H33" stroke="#1a3d63" stroke-width="1"/><path d="M0 215.5 H33" stroke="#1a3d63" stroke-width="1"/><path d="M0 251.5 H33" stroke="#1a3d63" stroke-width="1"/><path d="M0 287.5 H33" stroke="#1a3d63" stroke-width="1"/><path d="M0 323.5 H33" stroke="#1a3d63" stroke-width="1"/><path d="M0 359.5 H33" stroke="#1a3d63" stroke-width="1"/><path d="M0 395.5 H33" stroke="#1a3d63" stroke-width="1"/><g fill="none" stroke="#d6dee8" stroke-width="1.3" stroke-linecap="round" stroke-linejoin="round"><circle cx="15.6" cy="15.6" r="6.2"/><path d="M20.1 20.1 L25.6 25.6"/><path d="M19.5 82.3 H10.3 V96.5 H24.7 V87.5"/><path d="M15.8 91.2 L25 82"/><path d="M15.6 87.3 V91.4 H19.7" /><path d="M21.3 82 H25 V85.7"/><path d="M12.9 119 L24.9 129.6 A8 8 0 0 1 12.9 119 Z"/><path d="M19 124.4 L22.6 121.3"/><circle cx="16.9" cy="161.1" r="7.6"/><path d="M12.2 189.3 H19.3 L23.7 193.7 V204.6 H12.2 Z"/><path d="M19.3 189.3 V193.7 H23.7"/><path d="M14.8 197.2 H21.2 M14.8 200.5 H21.2"/><path d="M10.3 227.4 H24.7 V238.6 H23.6 L22.6 241.6 L19.6 238.6 H10.3 Z"/><path d="M13.2 231.6 H21.8 M13.2 234.6 H21.8"/><circle cx="17.6" cy="339.3" r="4.9"/><path d="M14.4 332.4 A7.8 7.8 0 1 0 24.9 342.3"/><path d="M17.6 347 V350.3 M14.2 350.3 H21"/><path d="M17.6 369.3 C16 372 11.2 376 11.2 379.4 A6.4 6.4 0 1 0 24 379.4 C24 376 19.2 372 17.6 369.3 Z"/><path d="M15.6 376.2 A4.5 4.5 0 0 0 15.4 381.8" stroke-width="1"/></g><g stroke="#d6dee8" stroke-width="2" fill="none"><path d="M10 48.3 H25"/><path d="M10 53.1 H25"/><path d="M10 57.9 H25"/></g><circle cx="23.3" cy="120.7" r="1.3" fill="#d6dee8"/><g stroke="#d6dee8" stroke-width="1.6" fill="none"><path d="M12.5 262.8 V276 M9.9 267.2 H15.1"/><path d="M17.6 262.8 V276 M15.0 272 H20.2"/><path d="M22.6 262.8 V276 M20.0 267.2 H25.2"/></g><circle cx="12.5" cy="408.4" r="1.5" fill="#d6dee8"/><path d="M17.2 408.4 H25" stroke="#d6dee8" stroke-width="1.2"/><circle cx="12.5" cy="413.4" r="1.5" fill="#d6dee8"/><path d="M17.2 413.4 H25" stroke="#d6dee8" stroke-width="1.2"/><circle cx="12.5" cy="418.5" r="1.5" fill="#d6dee8"/><path d="M17.2 418.5 H25" stroke="#d6dee8" stroke-width="1.2"/><text x="16.9" y="165" font-family="Liberation Sans, sans-serif" font-weight="bold" font-size="10.5" fill="#d6dee8" text-anchor="middle">?</text><text x="17.2" y="310" font-family="Liberation Sans, sans-serif" font-weight="bold" font-size="12" fill="#d6dee8" text-anchor="middle" textLength="15" lengthAdjust="spacingAndGlyphs">EN</text></svg>
</div>
</body></html>
